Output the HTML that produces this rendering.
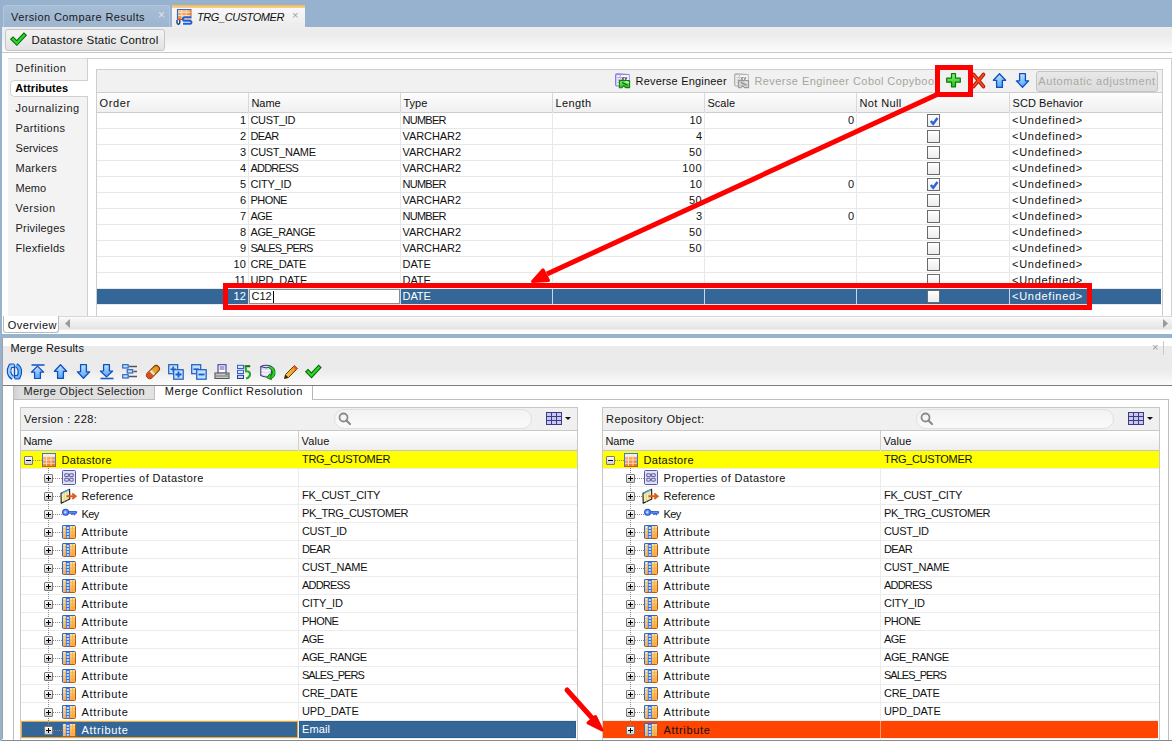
<!DOCTYPE html>
<html><head><meta charset="utf-8"><style>
html,body{margin:0;padding:0;}
body{width:1172px;height:741px;position:relative;overflow:hidden;background:#fff;font-family:'Liberation Sans', sans-serif;}
.t{position:absolute;white-space:nowrap;line-height:16px;font-family:'Liberation Sans', sans-serif;}
svg{overflow:visible}
</style></head><body>
<div style="position:absolute;left:0px;top:0px;width:1172px;height:27px;background:#97b2ce;"></div>
<div style="position:absolute;left:0px;top:27px;width:2px;height:714px;background:#97b2ce;"></div>
<div style="position:absolute;left:3px;top:5px;width:167px;height:22px;background:linear-gradient(#a7bdd6,#9db5d0);border:1px solid #b3c6dc;border-bottom:none;border-radius:3px 3px 0 0;box-sizing:border-box;"></div>
<div class="t" style="left:11px;top:9.19px;font-size:11px;font-weight:normal;letter-spacing:0.403px;color:#1a1a1a;">Version Compare Results</div>
<div class="t" style="left:158px;top:6.84px;font-size:12px;font-weight:normal;letter-spacing:0px;color:#dce5ef;">×</div>
<div style="position:absolute;left:172px;top:5px;width:133px;height:22px;background:linear-gradient(#fafafa,#ececec);border-radius:2px 2px 0 0;"></div>
<div style="position:absolute;left:172px;top:5px;width:133px;height:3px;background:linear-gradient(#f4b756,#fbd48e);border-radius:2px 2px 0 0;"></div>
<div class="t" style="left:197px;top:9.19px;font-size:11px;font-weight:normal;font-style:italic;letter-spacing:-0.424px;color:#111;">TRG_CUSTOMER</div>
<div class="t" style="left:292px;top:7.19px;font-size:11px;font-weight:normal;letter-spacing:0px;color:#a0a0a0;">×</div>
<div style="position:absolute;left:2px;top:27px;width:1170px;height:25px;background:linear-gradient(#f2f2f2 0px,#ececec 1px,#ececec 9px,#fcfcfc 25px);"></div>
<div style="position:absolute;left:2px;top:52px;width:1170px;height:1px;background:#c9c9c9;"></div>
<div style="position:absolute;left:5px;top:29px;width:160px;height:22px;background:linear-gradient(#f4f4f4,#e2e2e2);border:1px solid #c6c6c6;border-radius:3px;box-sizing:border-box;"></div>
<div class="t" style="left:31.5px;top:32.32px;font-size:11.5px;font-weight:normal;letter-spacing:0.204px;color:#111;">Datastore Static Control</div>
<svg style="position:absolute;left:0px;top:0px" width="30" height="50" viewBox="0 0 30 50"><path d="M13 39.2 L16.8 43 L24 35.4" fill="none" stroke="#0b5e0b" stroke-width="4.3" stroke-linecap="square"/><path d="M13 39.2 L16.8 43 L24 35.4" fill="none" stroke="#25dc25" stroke-width="2.3" stroke-linecap="square"/></svg>
<div style="position:absolute;left:2px;top:53px;width:1170px;height:280px;background:#fff;"></div>
<div style="position:absolute;left:8px;top:58px;width:80px;height:258px;background:#f3f3f3;border-top:1px solid #dcdcdc;box-sizing:border-box;"></div>
<div style="position:absolute;left:87px;top:58px;width:1085px;height:1px;background:#cfcfcf;"></div>
<div style="position:absolute;left:87px;top:58px;width:1px;height:258px;background:#cfcfcf;"></div>
<div style="position:absolute;left:1171px;top:58px;width:1px;height:258px;background:#d0d0d0;"></div>
<div style="position:absolute;left:10px;top:80px;width:78px;height:17px;background:#fff;border:1px solid #d0d0d0;border-right:none;border-radius:5px 0 0 5px;box-sizing:border-box;"></div>
<div class="t" style="left:15.5px;top:60.19px;font-size:11px;font-weight:normal;letter-spacing:0.514px;color:#1a1a1a;">Definition</div>
<div class="t" style="left:15.2px;top:80.19px;font-size:11px;font-weight:bold;letter-spacing:0.105px;color:#000;">Attributes</div>
<div class="t" style="left:15.5px;top:100.19px;font-size:11px;font-weight:normal;letter-spacing:0.441px;color:#1a1a1a;">Journalizing</div>
<div class="t" style="left:15.5px;top:120.19px;font-size:11px;font-weight:normal;letter-spacing:0.414px;color:#1a1a1a;">Partitions</div>
<div class="t" style="left:15.5px;top:140.19px;font-size:11px;font-weight:normal;letter-spacing:0.052px;color:#1a1a1a;">Services</div>
<div class="t" style="left:15.5px;top:160.19px;font-size:11px;font-weight:normal;letter-spacing:0.267px;color:#1a1a1a;">Markers</div>
<div class="t" style="left:15.5px;top:180.19px;font-size:11px;font-weight:normal;letter-spacing:0.034px;color:#1a1a1a;">Memo</div>
<div class="t" style="left:15.5px;top:200.19px;font-size:11px;font-weight:normal;letter-spacing:0.471px;color:#1a1a1a;">Version</div>
<div class="t" style="left:15.5px;top:220.19px;font-size:11px;font-weight:normal;letter-spacing:0.201px;color:#1a1a1a;">Privileges</div>
<div class="t" style="left:15.5px;top:240.19px;font-size:11px;font-weight:normal;letter-spacing:0.323px;color:#1a1a1a;">Flexfields</div>
<div style="position:absolute;left:96px;top:69px;width:1067px;height:24px;background:#f1f1f1;border:1px solid #cdcdcd;border-bottom:none;box-sizing:border-box;"></div>
<div class="t" style="left:635.5px;top:72.89px;font-size:11px;font-weight:normal;letter-spacing:0.202px;color:#111;">Reverse Engineer</div>
<div class="t" style="left:754.4px;top:72.89px;font-size:11px;font-weight:normal;letter-spacing:0.438px;color:#a6a69c;">Reverse Engineer Cobol Copybook</div>
<div style="position:absolute;left:1036px;top:71px;width:122px;height:21px;background:linear-gradient(#e8e8e8,#dcdcdc);border:1px solid #c4c4c4;border-radius:3px;box-sizing:border-box;"></div>
<div class="t" style="left:1038.3px;top:73.19px;font-size:11px;font-weight:normal;letter-spacing:0.576px;color:#a9a9a2;">Automatic adjustment</div>
<div style="position:absolute;left:96px;top:92px;width:1067px;height:21px;background:linear-gradient(#fdfdfd,#f0f0f0);border:1px solid #cdcdcd;border-left:1px solid #cdcdcd;box-sizing:border-box;"></div>
<div style="position:absolute;left:248px;top:93px;width:1px;height:19px;background:#d8d8d8;"></div>
<div style="position:absolute;left:400px;top:93px;width:1px;height:19px;background:#d8d8d8;"></div>
<div style="position:absolute;left:552px;top:93px;width:1px;height:19px;background:#d8d8d8;"></div>
<div style="position:absolute;left:704px;top:93px;width:1px;height:19px;background:#d8d8d8;"></div>
<div style="position:absolute;left:856px;top:93px;width:1px;height:19px;background:#d8d8d8;"></div>
<div style="position:absolute;left:1009px;top:93px;width:1px;height:19px;background:#d8d8d8;"></div>
<div class="t" style="left:99.5px;top:95.19px;font-size:11px;font-weight:normal;letter-spacing:0.615px;color:#111;">Order</div>
<div class="t" style="left:251.5px;top:95.19px;font-size:11px;font-weight:normal;letter-spacing:-0.086px;color:#111;">Name</div>
<div class="t" style="left:403.5px;top:95.19px;font-size:11px;font-weight:normal;letter-spacing:0px;color:#111;">Type</div>
<div class="t" style="left:555.5px;top:95.19px;font-size:11px;font-weight:normal;letter-spacing:0.391px;color:#111;">Length</div>
<div class="t" style="left:707.5px;top:95.19px;font-size:11px;font-weight:normal;letter-spacing:0px;color:#111;">Scale</div>
<div class="t" style="left:859.5px;top:95.19px;font-size:11px;font-weight:normal;letter-spacing:0.384px;color:#111;">Not Null</div>
<div class="t" style="left:1012.5px;top:95.19px;font-size:11px;font-weight:normal;letter-spacing:0.066px;color:#111;">SCD Behavior</div>
<div style="position:absolute;left:96px;top:112px;width:1px;height:204px;background:#cdcdcd;"></div>
<div style="position:absolute;left:1162px;top:112px;width:1px;height:204px;background:#cdcdcd;"></div>
<div style="position:absolute;left:97px;top:128px;width:1065px;height:1px;background:#e8e8e8;"></div>
<div style="position:absolute;left:97px;top:144px;width:1065px;height:1px;background:#e8e8e8;"></div>
<div style="position:absolute;left:97px;top:160px;width:1065px;height:1px;background:#e8e8e8;"></div>
<div style="position:absolute;left:97px;top:176px;width:1065px;height:1px;background:#e8e8e8;"></div>
<div style="position:absolute;left:97px;top:192px;width:1065px;height:1px;background:#e8e8e8;"></div>
<div style="position:absolute;left:97px;top:208px;width:1065px;height:1px;background:#e8e8e8;"></div>
<div style="position:absolute;left:97px;top:224px;width:1065px;height:1px;background:#e8e8e8;"></div>
<div style="position:absolute;left:97px;top:240px;width:1065px;height:1px;background:#e8e8e8;"></div>
<div style="position:absolute;left:97px;top:256px;width:1065px;height:1px;background:#e8e8e8;"></div>
<div style="position:absolute;left:97px;top:272px;width:1065px;height:1px;background:#e8e8e8;"></div>
<div style="position:absolute;left:97px;top:288px;width:1065px;height:1px;background:#e8e8e8;"></div>
<div style="position:absolute;left:97px;top:304px;width:1065px;height:1px;background:#e8e8e8;"></div>
<div style="position:absolute;left:248px;top:112px;width:1px;height:192px;background:#e8e8e8;"></div>
<div style="position:absolute;left:400px;top:112px;width:1px;height:192px;background:#e8e8e8;"></div>
<div style="position:absolute;left:552px;top:112px;width:1px;height:192px;background:#e8e8e8;"></div>
<div style="position:absolute;left:704px;top:112px;width:1px;height:192px;background:#e8e8e8;"></div>
<div style="position:absolute;left:856px;top:112px;width:1px;height:192px;background:#e8e8e8;"></div>
<div style="position:absolute;left:1009px;top:112px;width:1px;height:192px;background:#e8e8e8;"></div>
<div class="t" style="left:auto;right:926px;top:112.19px;font-size:11px;font-weight:normal;letter-spacing:0px;color:#111;">1</div>
<div class="t" style="left:250.5px;top:112.19px;font-size:11px;font-weight:normal;letter-spacing:-0.366px;color:#111;">CUST_ID</div>
<div class="t" style="left:402.5px;top:112.19px;font-size:11px;font-weight:normal;letter-spacing:-0.745px;color:#111;">NUMBER</div>
<div class="t" style="left:auto;right:470px;top:112.19px;font-size:11px;font-weight:normal;letter-spacing:0.075px;color:#111;">10</div>
<div class="t" style="left:auto;right:318px;top:112.19px;font-size:11px;font-weight:normal;letter-spacing:0px;color:#111;">0</div>
<div style="position:absolute;left:927px;top:114px;width:13px;height:13px;background:linear-gradient(#ffffff,#ececec);border:1px solid #6a6a6a;box-sizing:border-box;"></div>
<svg style="position:absolute;left:929px;top:116px" width="10" height="10" viewBox="0 0 10 10"><path d="M1.8 5 L4.2 7.8 L8.5 2" fill="none" stroke="#2f62d8" stroke-width="2.4"/></svg>
<div class="t" style="left:1012px;top:112.19px;font-size:11px;font-weight:normal;letter-spacing:0.727px;color:#111;">&lt;Undefined&gt;</div>
<div class="t" style="left:auto;right:926px;top:128.19px;font-size:11px;font-weight:normal;letter-spacing:0px;color:#111;">2</div>
<div class="t" style="left:250.5px;top:128.19px;font-size:11px;font-weight:normal;letter-spacing:-0.591px;color:#111;">DEAR</div>
<div class="t" style="left:402.5px;top:128.19px;font-size:11px;font-weight:normal;letter-spacing:-0.074px;color:#111;">VARCHAR2</div>
<div class="t" style="left:auto;right:470px;top:128.19px;font-size:11px;font-weight:normal;letter-spacing:0px;color:#111;">4</div>
<div style="position:absolute;left:927px;top:130px;width:13px;height:13px;background:linear-gradient(#ffffff,#ececec);border:1px solid #6a6a6a;box-sizing:border-box;"></div>
<div class="t" style="left:1012px;top:128.19px;font-size:11px;font-weight:normal;letter-spacing:0.727px;color:#111;">&lt;Undefined&gt;</div>
<div class="t" style="left:auto;right:926px;top:144.19px;font-size:11px;font-weight:normal;letter-spacing:0px;color:#111;">3</div>
<div class="t" style="left:250.5px;top:144.19px;font-size:11px;font-weight:normal;letter-spacing:-0.294px;color:#111;">CUST_NAME</div>
<div class="t" style="left:402.5px;top:144.19px;font-size:11px;font-weight:normal;letter-spacing:-0.074px;color:#111;">VARCHAR2</div>
<div class="t" style="left:auto;right:470px;top:144.19px;font-size:11px;font-weight:normal;letter-spacing:0.375px;color:#111;">50</div>
<div style="position:absolute;left:927px;top:146px;width:13px;height:13px;background:linear-gradient(#ffffff,#ececec);border:1px solid #6a6a6a;box-sizing:border-box;"></div>
<div class="t" style="left:1012px;top:144.19px;font-size:11px;font-weight:normal;letter-spacing:0.727px;color:#111;">&lt;Undefined&gt;</div>
<div class="t" style="left:auto;right:926px;top:160.19px;font-size:11px;font-weight:normal;letter-spacing:0px;color:#111;">4</div>
<div class="t" style="left:250.5px;top:160.19px;font-size:11px;font-weight:normal;letter-spacing:-0.798px;color:#111;">ADDRESS</div>
<div class="t" style="left:402.5px;top:160.19px;font-size:11px;font-weight:normal;letter-spacing:-0.074px;color:#111;">VARCHAR2</div>
<div class="t" style="left:auto;right:470px;top:160.19px;font-size:11px;font-weight:normal;letter-spacing:0.480px;color:#111;">100</div>
<div style="position:absolute;left:927px;top:162px;width:13px;height:13px;background:linear-gradient(#ffffff,#ececec);border:1px solid #6a6a6a;box-sizing:border-box;"></div>
<div class="t" style="left:1012px;top:160.19px;font-size:11px;font-weight:normal;letter-spacing:0.727px;color:#111;">&lt;Undefined&gt;</div>
<div class="t" style="left:auto;right:926px;top:176.19px;font-size:11px;font-weight:normal;letter-spacing:0px;color:#111;">5</div>
<div class="t" style="left:250.5px;top:176.19px;font-size:11px;font-weight:normal;letter-spacing:-0.212px;color:#111;">CITY_ID</div>
<div class="t" style="left:402.5px;top:176.19px;font-size:11px;font-weight:normal;letter-spacing:-0.745px;color:#111;">NUMBER</div>
<div class="t" style="left:auto;right:470px;top:176.19px;font-size:11px;font-weight:normal;letter-spacing:0.075px;color:#111;">10</div>
<div class="t" style="left:auto;right:318px;top:176.19px;font-size:11px;font-weight:normal;letter-spacing:0px;color:#111;">0</div>
<div style="position:absolute;left:927px;top:178px;width:13px;height:13px;background:linear-gradient(#ffffff,#ececec);border:1px solid #6a6a6a;box-sizing:border-box;"></div>
<svg style="position:absolute;left:929px;top:180px" width="10" height="10" viewBox="0 0 10 10"><path d="M1.8 5 L4.2 7.8 L8.5 2" fill="none" stroke="#2f62d8" stroke-width="2.4"/></svg>
<div class="t" style="left:1012px;top:176.19px;font-size:11px;font-weight:normal;letter-spacing:0.727px;color:#111;">&lt;Undefined&gt;</div>
<div class="t" style="left:auto;right:926px;top:192.19px;font-size:11px;font-weight:normal;letter-spacing:0px;color:#111;">6</div>
<div class="t" style="left:250.5px;top:192.19px;font-size:11px;font-weight:normal;letter-spacing:-0.565px;color:#111;">PHONE</div>
<div class="t" style="left:402.5px;top:192.19px;font-size:11px;font-weight:normal;letter-spacing:-0.074px;color:#111;">VARCHAR2</div>
<div class="t" style="left:auto;right:470px;top:192.19px;font-size:11px;font-weight:normal;letter-spacing:0.375px;color:#111;">50</div>
<div style="position:absolute;left:927px;top:194px;width:13px;height:13px;background:linear-gradient(#ffffff,#ececec);border:1px solid #6a6a6a;box-sizing:border-box;"></div>
<div class="t" style="left:1012px;top:192.19px;font-size:11px;font-weight:normal;letter-spacing:0.727px;color:#111;">&lt;Undefined&gt;</div>
<div class="t" style="left:auto;right:926px;top:208.19px;font-size:11px;font-weight:normal;letter-spacing:0px;color:#111;">7</div>
<div class="t" style="left:250.5px;top:208.19px;font-size:11px;font-weight:normal;letter-spacing:-0.578px;color:#111;">AGE</div>
<div class="t" style="left:402.5px;top:208.19px;font-size:11px;font-weight:normal;letter-spacing:-0.745px;color:#111;">NUMBER</div>
<div class="t" style="left:auto;right:470px;top:208.19px;font-size:11px;font-weight:normal;letter-spacing:0px;color:#111;">3</div>
<div class="t" style="left:auto;right:318px;top:208.19px;font-size:11px;font-weight:normal;letter-spacing:0px;color:#111;">0</div>
<div style="position:absolute;left:927px;top:210px;width:13px;height:13px;background:linear-gradient(#ffffff,#ececec);border:1px solid #6a6a6a;box-sizing:border-box;"></div>
<div class="t" style="left:1012px;top:208.19px;font-size:11px;font-weight:normal;letter-spacing:0.727px;color:#111;">&lt;Undefined&gt;</div>
<div class="t" style="left:auto;right:926px;top:224.19px;font-size:11px;font-weight:normal;letter-spacing:0px;color:#111;">8</div>
<div class="t" style="left:250.5px;top:224.19px;font-size:11px;font-weight:normal;letter-spacing:-0.419px;color:#111;">AGE_RANGE</div>
<div class="t" style="left:402.5px;top:224.19px;font-size:11px;font-weight:normal;letter-spacing:-0.074px;color:#111;">VARCHAR2</div>
<div class="t" style="left:auto;right:470px;top:224.19px;font-size:11px;font-weight:normal;letter-spacing:0.375px;color:#111;">50</div>
<div style="position:absolute;left:927px;top:226px;width:13px;height:13px;background:linear-gradient(#ffffff,#ececec);border:1px solid #6a6a6a;box-sizing:border-box;"></div>
<div class="t" style="left:1012px;top:224.19px;font-size:11px;font-weight:normal;letter-spacing:0.727px;color:#111;">&lt;Undefined&gt;</div>
<div class="t" style="left:auto;right:926px;top:240.19px;font-size:11px;font-weight:normal;letter-spacing:0px;color:#111;">9</div>
<div class="t" style="left:250.5px;top:240.19px;font-size:11px;font-weight:normal;letter-spacing:-0.975px;color:#111;">SALES_PERS</div>
<div class="t" style="left:402.5px;top:240.19px;font-size:11px;font-weight:normal;letter-spacing:-0.074px;color:#111;">VARCHAR2</div>
<div class="t" style="left:auto;right:470px;top:240.19px;font-size:11px;font-weight:normal;letter-spacing:0.375px;color:#111;">50</div>
<div style="position:absolute;left:927px;top:242px;width:13px;height:13px;background:linear-gradient(#ffffff,#ececec);border:1px solid #6a6a6a;box-sizing:border-box;"></div>
<div class="t" style="left:1012px;top:240.19px;font-size:11px;font-weight:normal;letter-spacing:0.727px;color:#111;">&lt;Undefined&gt;</div>
<div class="t" style="left:auto;right:926px;top:256.19px;font-size:11px;font-weight:normal;letter-spacing:0.075px;color:#111;">10</div>
<div class="t" style="left:250.5px;top:256.19px;font-size:11px;font-weight:normal;letter-spacing:-0.297px;color:#111;">CRE_DATE</div>
<div class="t" style="left:402.5px;top:256.19px;font-size:11px;font-weight:normal;letter-spacing:-0.058px;color:#111;">DATE</div>
<div style="position:absolute;left:927px;top:258px;width:13px;height:13px;background:linear-gradient(#ffffff,#ececec);border:1px solid #6a6a6a;box-sizing:border-box;"></div>
<div class="t" style="left:1012px;top:256.19px;font-size:11px;font-weight:normal;letter-spacing:0.727px;color:#111;">&lt;Undefined&gt;</div>
<div class="t" style="left:auto;right:926px;top:272.19px;font-size:11px;font-weight:normal;letter-spacing:0.039px;color:#111;">11</div>
<div class="t" style="left:250.5px;top:272.19px;font-size:11px;font-weight:normal;letter-spacing:-0.159px;color:#111;">UPD_DATE</div>
<div class="t" style="left:402.5px;top:272.19px;font-size:11px;font-weight:normal;letter-spacing:-0.058px;color:#111;">DATE</div>
<div style="position:absolute;left:927px;top:274px;width:13px;height:13px;background:linear-gradient(#ffffff,#ececec);border:1px solid #6a6a6a;box-sizing:border-box;"></div>
<div class="t" style="left:1012px;top:272.19px;font-size:11px;font-weight:normal;letter-spacing:0.727px;color:#111;">&lt;Undefined&gt;</div>
<div style="position:absolute;left:97px;top:289px;width:1064px;height:15px;background:#346698;"></div>
<div style="position:absolute;left:248px;top:289px;width:1px;height:15px;background:#c9d6e4;"></div>
<div style="position:absolute;left:400px;top:289px;width:1px;height:15px;background:#c9d6e4;"></div>
<div style="position:absolute;left:552px;top:289px;width:1px;height:15px;background:#c9d6e4;"></div>
<div style="position:absolute;left:704px;top:289px;width:1px;height:15px;background:#c9d6e4;"></div>
<div style="position:absolute;left:856px;top:289px;width:1px;height:15px;background:#c9d6e4;"></div>
<div style="position:absolute;left:1009px;top:289px;width:1px;height:15px;background:#c9d6e4;"></div>
<div class="t" style="left:auto;right:926px;top:288.19px;font-size:11px;font-weight:normal;letter-spacing:0.075px;color:#fff;">12</div>
<div style="position:absolute;left:249px;top:289px;width:151px;height:15px;background:#fff;border:1px solid #8c8c8c;box-sizing:border-box;"></div>
<div class="t" style="left:251.5px;top:288.19px;font-size:11px;font-weight:normal;letter-spacing:0px;color:#111;">C12</div>
<div style="position:absolute;left:273px;top:291px;width:1px;height:12px;background:#000;"></div>
<div class="t" style="left:402.5px;top:288.19px;font-size:11px;font-weight:normal;letter-spacing:-0.058px;color:#fff;">DATE</div>
<div style="position:absolute;left:927px;top:290px;width:13px;height:13px;background:linear-gradient(#ffffff,#ececec);border:1px solid #6a6a6a;box-sizing:border-box;"></div>
<div class="t" style="left:1012px;top:288.19px;font-size:11px;font-weight:normal;letter-spacing:0.727px;color:#fff;">&lt;Undefined&gt;</div>
<div style="position:absolute;left:59px;top:316px;width:1113px;height:18px;background:linear-gradient(#d8d8d8 0px,#d8d8d8 1px,#fcfcfc 1px,#f3f3f3 4px,#e4e4e4 13px,#fafafa 14px,#ffffff 18px);"></div>
<div style="position:absolute;left:3px;top:316px;width:56px;height:17px;background:#fff;border:1px solid #b9b9b9;border-top:none;border-radius:0 0 3px 3px;box-sizing:border-box;"></div>
<div class="t" style="left:7.8px;top:316.79px;font-size:11px;font-weight:normal;letter-spacing:0.395px;color:#111;">Overview</div>
<svg style="position:absolute;left:64px;top:319px" width="7" height="9" viewBox="0 0 7 9"><path d="M6 0 L1 4.5 L6 9Z" fill="#9a9a9a"/></svg>
<svg style="position:absolute;left:1162px;top:319px" width="7" height="9" viewBox="0 0 7 9"><path d="M1 0 L6 4.5 L1 9Z" fill="#9a9a9a"/></svg>
<div style="position:absolute;left:0px;top:334px;width:1172px;height:4px;background:#97b2ce;"></div>
<div style="position:absolute;left:2px;top:338px;width:1170px;height:403px;background:#fff;border-radius:5px 0 0 0;"></div>
<div style="position:absolute;left:2px;top:338px;width:1170px;height:47px;background:linear-gradient(#ffffff 0px,#ffffff 8px,#ebebeb 8px,#ebebeb 32px,#fbfbfb 46px);border-radius:5px 0 0 0;"></div>
<div class="t" style="left:1152px;top:339.19px;font-size:11px;font-weight:normal;letter-spacing:0px;color:#9a9a9a;">×</div>
<div style="position:absolute;left:1163px;top:341px;width:1px;height:14px;background:#c8c8c8;"></div>
<div class="t" style="left:10.5px;top:340.19px;font-size:11px;font-weight:normal;letter-spacing:0.206px;color:#111;">Merge Results</div>
<div style="position:absolute;left:2px;top:385px;width:1170px;height:1px;background:#7d7d7d;"></div>
<div style="position:absolute;left:13px;top:386px;width:142px;height:14px;background:linear-gradient(90deg,#cfcfcf 0px,#dedede 8px,#e2e2e2 100%);border-right:1px solid #c0c0c0;border-bottom:1px solid #bdbdbd;box-sizing:border-box;"></div>
<div class="t" style="left:23.4px;top:383.49px;font-size:11px;font-weight:normal;letter-spacing:0.330px;color:#222;">Merge Object Selection</div>
<div style="position:absolute;left:155px;top:386px;width:157px;height:14px;background:#fff;"></div>
<div class="t" style="left:164.8px;top:383.49px;font-size:11px;font-weight:normal;letter-spacing:0.482px;color:#111;">Merge Conflict Resolution</div>
<div style="position:absolute;left:312px;top:386px;width:1px;height:14px;background:#b5b5b5;"></div>
<div style="position:absolute;left:312px;top:399px;width:857px;height:1px;background:#bdbdbd;"></div>
<div style="position:absolute;left:13px;top:386px;width:1px;height:355px;background:#bdbdbd;"></div>
<div style="position:absolute;left:1168px;top:399px;width:1px;height:342px;background:#bdbdbd;"></div>
<div style="position:absolute;left:20px;top:407px;width:558px;height:334px;background:#fff;border:1px solid #c8c8c8;box-sizing:border-box;"></div>
<div style="position:absolute;left:20px;top:407px;width:558px;height:24px;background:#f0f0f0;border:1px solid #c8c8c8;border-bottom:1px solid #c8c8c8;box-sizing:border-box;"></div>
<div class="t" style="left:24px;top:411.19px;font-size:11px;font-weight:normal;letter-spacing:0.423px;color:#111;">Version : 228:</div>
<div style="position:absolute;left:334px;top:409px;width:198px;height:20px;background:linear-gradient(#f3f3f3,#fafafa);border:1px solid #e0e0e0;border-radius:10px;box-sizing:border-box;"></div>
<svg style="position:absolute;left:338px;top:412px" width="14" height="14" viewBox="0 0 14 14"><circle cx="5.5" cy="5.5" r="4" fill="none" stroke="#8a8a8a" stroke-width="1.8"/><path d="M8.5 8.5 L12 12" stroke="#8a8a8a" stroke-width="2.2" stroke-linecap="round"/></svg>
<svg style="position:absolute;left:546px;top:412px" width="26" height="13" viewBox="0 0 26 13"><rect x="0.5" y="0.5" width="15" height="12" fill="#c9c9ef" stroke="#3b3b8a"/><path d="M0.5 4.5H15.5M0.5 8.5H15.5M5.5 0.5V12.5M10.5 0.5V12.5" stroke="#3b3b8a" stroke-width="1"/><path d="M19 5 L25 5 L22 8Z" fill="#111"/></svg>
<div style="position:absolute;left:20px;top:431px;width:558px;height:20px;background:linear-gradient(#ffffff,#efefef);border:1px solid #c8c8c8;border-top:none;border-bottom-color:#c4c4d0;box-sizing:border-box;"></div>
<div style="position:absolute;left:298px;top:431px;width:1px;height:19px;background:#d0d0d0;"></div>
<div class="t" style="left:23.4px;top:432.99px;font-size:11px;font-weight:normal;letter-spacing:-0.086px;color:#111;">Name</div>
<div class="t" style="left:301.6px;top:432.99px;font-size:11px;font-weight:normal;letter-spacing:0.134px;color:#111;">Value</div>
<div style="position:absolute;left:21px;top:468px;width:556px;height:1px;background:#ececec;"></div>
<div style="position:absolute;left:21px;top:486px;width:556px;height:1px;background:#ececec;"></div>
<div style="position:absolute;left:21px;top:504px;width:556px;height:1px;background:#ececec;"></div>
<div style="position:absolute;left:21px;top:522px;width:556px;height:1px;background:#ececec;"></div>
<div style="position:absolute;left:21px;top:540px;width:556px;height:1px;background:#ececec;"></div>
<div style="position:absolute;left:21px;top:558px;width:556px;height:1px;background:#ececec;"></div>
<div style="position:absolute;left:21px;top:576px;width:556px;height:1px;background:#ececec;"></div>
<div style="position:absolute;left:21px;top:594px;width:556px;height:1px;background:#ececec;"></div>
<div style="position:absolute;left:21px;top:612px;width:556px;height:1px;background:#ececec;"></div>
<div style="position:absolute;left:21px;top:630px;width:556px;height:1px;background:#ececec;"></div>
<div style="position:absolute;left:21px;top:648px;width:556px;height:1px;background:#ececec;"></div>
<div style="position:absolute;left:21px;top:666px;width:556px;height:1px;background:#ececec;"></div>
<div style="position:absolute;left:21px;top:684px;width:556px;height:1px;background:#ececec;"></div>
<div style="position:absolute;left:21px;top:702px;width:556px;height:1px;background:#ececec;"></div>
<div style="position:absolute;left:21px;top:720px;width:556px;height:1px;background:#ececec;"></div>
<div style="position:absolute;left:21px;top:738px;width:556px;height:1px;background:#ececec;"></div>
<div style="position:absolute;left:298px;top:450px;width:1px;height:290px;background:#ececec;"></div>
<div style="position:absolute;left:21px;top:451px;width:556px;height:17px;background:#ffff00;"></div>
<div style="position:absolute;left:21px;top:721px;width:277px;height:17px;background:#346698;border:1px solid #f5a623;box-sizing:border-box;"></div>
<div style="position:absolute;left:299px;top:721px;width:277px;height:17px;background:#346698;border:1px solid #2b5d95;box-sizing:border-box;"></div>
<div style="position:absolute;left:48px;top:468px;width:1px;height:266px;background:repeating-linear-gradient(#8a8a8a 0 1px,transparent 1px 2px);"></div>
<div style="position:absolute;left:33px;top:460px;width:9px;height:1px;background:repeating-linear-gradient(90deg,#8a8a8a 0 1px,transparent 1px 2px);"></div>
<div style="position:absolute;left:24px;top:456px;width:9px;height:9px;background:linear-gradient(#fafafa,#cfcfcf);border:1px solid #7a7a7a;border-radius:1px;box-sizing:border-box;"></div>
<div style="position:absolute;left:26px;top:460px;width:5px;height:1px;background:#000;"></div>
<svg style="position:absolute;left:42px;top:453px" width="16" height="16" viewBox="0 0 16 16"><rect x="0.5" y="0.5" width="13" height="13" fill="url(#gds)" stroke="#c45a14"/><rect x="1" y="1" width="12" height="2.5" fill="#e8f0fa"/><path d="M0.5 13.5V0.5H13.5V13" fill="none" stroke="#3b7ad6"/><path d="M1 3.5H13 M1 7H13 M1 10.3H13 M4.5 1V13 M9 1V13" stroke="#fde8cf" stroke-width="0.8"/></svg>
<div class="t" style="left:61.5px;top:452.19px;font-size:11px;font-weight:normal;letter-spacing:0.300px;color:#111;">Datastore</div>
<div class="t" style="left:302px;top:451.19px;font-size:11px;font-weight:normal;letter-spacing:-0.341px;color:#111;">TRG_CUSTOMER</div>
<div style="position:absolute;left:53px;top:478px;width:9px;height:1px;background:repeating-linear-gradient(90deg,#8a8a8a 0 1px,transparent 1px 2px);"></div>
<div style="position:absolute;left:44px;top:474px;width:9px;height:9px;background:linear-gradient(#fafafa,#cfcfcf);border:1px solid #7a7a7a;border-radius:1px;box-sizing:border-box;"></div>
<div style="position:absolute;left:46px;top:478px;width:5px;height:1px;background:#000;"></div>
<div style="position:absolute;left:48px;top:476px;width:1px;height:5px;background:#000;"></div>
<svg style="position:absolute;left:62px;top:470px" width="16" height="16" viewBox="0 0 16 16"><rect x="0.5" y="0.5" width="13" height="14" rx="1" fill="#e2e2f4" stroke="#5a5aa0"/><rect x="2.8" y="3.8" width="3.6" height="2.8" rx="0.2" fill="none" stroke="#5a5aa0" stroke-width="1"/><rect x="7.6" y="3.8" width="3.6" height="2.8" rx="0.2" fill="none" stroke="#5a5aa0" stroke-width="1"/><rect x="2.8" y="8.3" width="3.6" height="2.8" rx="0.2" fill="none" stroke="#5a5aa0" stroke-width="1"/><rect x="7.6" y="8.3" width="3.6" height="2.8" rx="0.2" fill="none" stroke="#5a5aa0" stroke-width="1"/></svg>
<div class="t" style="left:81.5px;top:470.19px;font-size:11px;font-weight:normal;letter-spacing:0.403px;color:#111;">Properties of Datastore</div>
<div style="position:absolute;left:53px;top:496px;width:9px;height:1px;background:repeating-linear-gradient(90deg,#8a8a8a 0 1px,transparent 1px 2px);"></div>
<div style="position:absolute;left:44px;top:492px;width:9px;height:9px;background:linear-gradient(#fafafa,#cfcfcf);border:1px solid #7a7a7a;border-radius:1px;box-sizing:border-box;"></div>
<div style="position:absolute;left:46px;top:496px;width:5px;height:1px;background:#000;"></div>
<div style="position:absolute;left:48px;top:494px;width:1px;height:5px;background:#000;"></div>
<svg style="position:absolute;left:61px;top:489px" width="16" height="16" viewBox="0 0 16 16"><path d="M0 4.3 L8.6 0.3 L8.8 10 L0.2 14.3Z" fill="#f8f0b0" stroke="#111" stroke-width="1.1" stroke-linejoin="round"/><path d="M0.6 4.3 L8.3 0.6" stroke="#4aa0f0" stroke-width="1.3"/><path d="M3.3 3V12.8 M6 1.7V11.5" stroke="#d8c880" stroke-width="0.8"/><path d="M5.5 7.3H14 M11.3 4.6 L14.6 7.3 L11.3 10" fill="none" stroke="#e05a1c" stroke-width="1.9"/></svg>
<div class="t" style="left:81.5px;top:488.19px;font-size:11px;font-weight:normal;letter-spacing:0.093px;color:#111;">Reference</div>
<div class="t" style="left:302px;top:487.19px;font-size:11px;font-weight:normal;letter-spacing:-0.258px;color:#111;">FK_CUST_CITY</div>
<div style="position:absolute;left:53px;top:514px;width:9px;height:1px;background:repeating-linear-gradient(90deg,#8a8a8a 0 1px,transparent 1px 2px);"></div>
<div style="position:absolute;left:44px;top:510px;width:9px;height:9px;background:linear-gradient(#fafafa,#cfcfcf);border:1px solid #7a7a7a;border-radius:1px;box-sizing:border-box;"></div>
<div style="position:absolute;left:46px;top:514px;width:5px;height:1px;background:#000;"></div>
<div style="position:absolute;left:48px;top:512px;width:1px;height:5px;background:#000;"></div>
<svg style="position:absolute;left:62px;top:509px" width="16" height="16" viewBox="0 0 16 16"><circle cx="3.6" cy="3.3" r="3" fill="#6b98f2" stroke="#2750c8" stroke-width="1.1"/><circle cx="3.2" cy="3.3" r="1" fill="#dce8ff"/><path d="M6.2 2.6 H14.6 V4.2 H13 V5.8 H11.8 V4.2 H10.6 V5.4 H9.2 V4.2 H6.2Z" fill="#6b98f2" stroke="#2750c8" stroke-width="0.9"/></svg>
<div class="t" style="left:81.5px;top:506.19px;font-size:11px;font-weight:normal;letter-spacing:-0.590px;color:#111;">Key</div>
<div class="t" style="left:302px;top:505.19px;font-size:11px;font-weight:normal;letter-spacing:-0.458px;color:#111;">PK_TRG_CUSTOMER</div>
<div style="position:absolute;left:53px;top:532px;width:9px;height:1px;background:repeating-linear-gradient(90deg,#8a8a8a 0 1px,transparent 1px 2px);"></div>
<div style="position:absolute;left:44px;top:528px;width:9px;height:9px;background:linear-gradient(#fafafa,#cfcfcf);border:1px solid #7a7a7a;border-radius:1px;box-sizing:border-box;"></div>
<div style="position:absolute;left:46px;top:532px;width:5px;height:1px;background:#000;"></div>
<div style="position:absolute;left:48px;top:530px;width:1px;height:5px;background:#000;"></div>
<svg style="position:absolute;left:62px;top:525px" width="16" height="16" viewBox="0 0 16 16"><rect x="0.5" y="0.5" width="13" height="13" rx="1" fill="url(#gat)" stroke="#b85a10"/><path d="M0.5 13 V1.5 Q0.5 0.5 1.5 0.5 H13" fill="none" stroke="#2a6ad8" stroke-width="1.1"/><rect x="3.8" y="1" width="4" height="12.5" fill="#3a6ee0"/><rect x="4.7" y="2" width="2.2" height="2" fill="#c8d8ff"/><rect x="4.7" y="5" width="2.2" height="2" fill="#c8d8ff"/><rect x="4.7" y="8" width="2.2" height="2" fill="#c8d8ff"/><rect x="4.7" y="11" width="2.2" height="1.8" fill="#c8d8ff"/><path d="M1 3.8H3.8 M7.8 3.8H13 M1 7H3.8 M7.8 7H13 M1 10.2H3.8 M7.8 10.2H13 M10.5 1V13" stroke="#f2a848" stroke-width="0.7"/></svg>
<div class="t" style="left:81.5px;top:524.19px;font-size:11px;font-weight:normal;letter-spacing:0.670px;color:#111;">Attribute</div>
<div class="t" style="left:302px;top:523.19px;font-size:11px;font-weight:normal;letter-spacing:-0.366px;color:#111;">CUST_ID</div>
<div style="position:absolute;left:53px;top:550px;width:9px;height:1px;background:repeating-linear-gradient(90deg,#8a8a8a 0 1px,transparent 1px 2px);"></div>
<div style="position:absolute;left:44px;top:546px;width:9px;height:9px;background:linear-gradient(#fafafa,#cfcfcf);border:1px solid #7a7a7a;border-radius:1px;box-sizing:border-box;"></div>
<div style="position:absolute;left:46px;top:550px;width:5px;height:1px;background:#000;"></div>
<div style="position:absolute;left:48px;top:548px;width:1px;height:5px;background:#000;"></div>
<svg style="position:absolute;left:62px;top:543px" width="16" height="16" viewBox="0 0 16 16"><rect x="0.5" y="0.5" width="13" height="13" rx="1" fill="url(#gat)" stroke="#b85a10"/><path d="M0.5 13 V1.5 Q0.5 0.5 1.5 0.5 H13" fill="none" stroke="#2a6ad8" stroke-width="1.1"/><rect x="3.8" y="1" width="4" height="12.5" fill="#3a6ee0"/><rect x="4.7" y="2" width="2.2" height="2" fill="#c8d8ff"/><rect x="4.7" y="5" width="2.2" height="2" fill="#c8d8ff"/><rect x="4.7" y="8" width="2.2" height="2" fill="#c8d8ff"/><rect x="4.7" y="11" width="2.2" height="1.8" fill="#c8d8ff"/><path d="M1 3.8H3.8 M7.8 3.8H13 M1 7H3.8 M7.8 7H13 M1 10.2H3.8 M7.8 10.2H13 M10.5 1V13" stroke="#f2a848" stroke-width="0.7"/></svg>
<div class="t" style="left:81.5px;top:542.19px;font-size:11px;font-weight:normal;letter-spacing:0.670px;color:#111;">Attribute</div>
<div class="t" style="left:302px;top:541.19px;font-size:11px;font-weight:normal;letter-spacing:-0.591px;color:#111;">DEAR</div>
<div style="position:absolute;left:53px;top:568px;width:9px;height:1px;background:repeating-linear-gradient(90deg,#8a8a8a 0 1px,transparent 1px 2px);"></div>
<div style="position:absolute;left:44px;top:564px;width:9px;height:9px;background:linear-gradient(#fafafa,#cfcfcf);border:1px solid #7a7a7a;border-radius:1px;box-sizing:border-box;"></div>
<div style="position:absolute;left:46px;top:568px;width:5px;height:1px;background:#000;"></div>
<div style="position:absolute;left:48px;top:566px;width:1px;height:5px;background:#000;"></div>
<svg style="position:absolute;left:62px;top:561px" width="16" height="16" viewBox="0 0 16 16"><rect x="0.5" y="0.5" width="13" height="13" rx="1" fill="url(#gat)" stroke="#b85a10"/><path d="M0.5 13 V1.5 Q0.5 0.5 1.5 0.5 H13" fill="none" stroke="#2a6ad8" stroke-width="1.1"/><rect x="3.8" y="1" width="4" height="12.5" fill="#3a6ee0"/><rect x="4.7" y="2" width="2.2" height="2" fill="#c8d8ff"/><rect x="4.7" y="5" width="2.2" height="2" fill="#c8d8ff"/><rect x="4.7" y="8" width="2.2" height="2" fill="#c8d8ff"/><rect x="4.7" y="11" width="2.2" height="1.8" fill="#c8d8ff"/><path d="M1 3.8H3.8 M7.8 3.8H13 M1 7H3.8 M7.8 7H13 M1 10.2H3.8 M7.8 10.2H13 M10.5 1V13" stroke="#f2a848" stroke-width="0.7"/></svg>
<div class="t" style="left:81.5px;top:560.19px;font-size:11px;font-weight:normal;letter-spacing:0.670px;color:#111;">Attribute</div>
<div class="t" style="left:302px;top:559.19px;font-size:11px;font-weight:normal;letter-spacing:-0.294px;color:#111;">CUST_NAME</div>
<div style="position:absolute;left:53px;top:586px;width:9px;height:1px;background:repeating-linear-gradient(90deg,#8a8a8a 0 1px,transparent 1px 2px);"></div>
<div style="position:absolute;left:44px;top:582px;width:9px;height:9px;background:linear-gradient(#fafafa,#cfcfcf);border:1px solid #7a7a7a;border-radius:1px;box-sizing:border-box;"></div>
<div style="position:absolute;left:46px;top:586px;width:5px;height:1px;background:#000;"></div>
<div style="position:absolute;left:48px;top:584px;width:1px;height:5px;background:#000;"></div>
<svg style="position:absolute;left:62px;top:579px" width="16" height="16" viewBox="0 0 16 16"><rect x="0.5" y="0.5" width="13" height="13" rx="1" fill="url(#gat)" stroke="#b85a10"/><path d="M0.5 13 V1.5 Q0.5 0.5 1.5 0.5 H13" fill="none" stroke="#2a6ad8" stroke-width="1.1"/><rect x="3.8" y="1" width="4" height="12.5" fill="#3a6ee0"/><rect x="4.7" y="2" width="2.2" height="2" fill="#c8d8ff"/><rect x="4.7" y="5" width="2.2" height="2" fill="#c8d8ff"/><rect x="4.7" y="8" width="2.2" height="2" fill="#c8d8ff"/><rect x="4.7" y="11" width="2.2" height="1.8" fill="#c8d8ff"/><path d="M1 3.8H3.8 M7.8 3.8H13 M1 7H3.8 M7.8 7H13 M1 10.2H3.8 M7.8 10.2H13 M10.5 1V13" stroke="#f2a848" stroke-width="0.7"/></svg>
<div class="t" style="left:81.5px;top:578.19px;font-size:11px;font-weight:normal;letter-spacing:0.670px;color:#111;">Attribute</div>
<div class="t" style="left:302px;top:577.19px;font-size:11px;font-weight:normal;letter-spacing:-0.798px;color:#111;">ADDRESS</div>
<div style="position:absolute;left:53px;top:604px;width:9px;height:1px;background:repeating-linear-gradient(90deg,#8a8a8a 0 1px,transparent 1px 2px);"></div>
<div style="position:absolute;left:44px;top:600px;width:9px;height:9px;background:linear-gradient(#fafafa,#cfcfcf);border:1px solid #7a7a7a;border-radius:1px;box-sizing:border-box;"></div>
<div style="position:absolute;left:46px;top:604px;width:5px;height:1px;background:#000;"></div>
<div style="position:absolute;left:48px;top:602px;width:1px;height:5px;background:#000;"></div>
<svg style="position:absolute;left:62px;top:597px" width="16" height="16" viewBox="0 0 16 16"><rect x="0.5" y="0.5" width="13" height="13" rx="1" fill="url(#gat)" stroke="#b85a10"/><path d="M0.5 13 V1.5 Q0.5 0.5 1.5 0.5 H13" fill="none" stroke="#2a6ad8" stroke-width="1.1"/><rect x="3.8" y="1" width="4" height="12.5" fill="#3a6ee0"/><rect x="4.7" y="2" width="2.2" height="2" fill="#c8d8ff"/><rect x="4.7" y="5" width="2.2" height="2" fill="#c8d8ff"/><rect x="4.7" y="8" width="2.2" height="2" fill="#c8d8ff"/><rect x="4.7" y="11" width="2.2" height="1.8" fill="#c8d8ff"/><path d="M1 3.8H3.8 M7.8 3.8H13 M1 7H3.8 M7.8 7H13 M1 10.2H3.8 M7.8 10.2H13 M10.5 1V13" stroke="#f2a848" stroke-width="0.7"/></svg>
<div class="t" style="left:81.5px;top:596.19px;font-size:11px;font-weight:normal;letter-spacing:0.670px;color:#111;">Attribute</div>
<div class="t" style="left:302px;top:595.19px;font-size:11px;font-weight:normal;letter-spacing:-0.212px;color:#111;">CITY_ID</div>
<div style="position:absolute;left:53px;top:622px;width:9px;height:1px;background:repeating-linear-gradient(90deg,#8a8a8a 0 1px,transparent 1px 2px);"></div>
<div style="position:absolute;left:44px;top:618px;width:9px;height:9px;background:linear-gradient(#fafafa,#cfcfcf);border:1px solid #7a7a7a;border-radius:1px;box-sizing:border-box;"></div>
<div style="position:absolute;left:46px;top:622px;width:5px;height:1px;background:#000;"></div>
<div style="position:absolute;left:48px;top:620px;width:1px;height:5px;background:#000;"></div>
<svg style="position:absolute;left:62px;top:615px" width="16" height="16" viewBox="0 0 16 16"><rect x="0.5" y="0.5" width="13" height="13" rx="1" fill="url(#gat)" stroke="#b85a10"/><path d="M0.5 13 V1.5 Q0.5 0.5 1.5 0.5 H13" fill="none" stroke="#2a6ad8" stroke-width="1.1"/><rect x="3.8" y="1" width="4" height="12.5" fill="#3a6ee0"/><rect x="4.7" y="2" width="2.2" height="2" fill="#c8d8ff"/><rect x="4.7" y="5" width="2.2" height="2" fill="#c8d8ff"/><rect x="4.7" y="8" width="2.2" height="2" fill="#c8d8ff"/><rect x="4.7" y="11" width="2.2" height="1.8" fill="#c8d8ff"/><path d="M1 3.8H3.8 M7.8 3.8H13 M1 7H3.8 M7.8 7H13 M1 10.2H3.8 M7.8 10.2H13 M10.5 1V13" stroke="#f2a848" stroke-width="0.7"/></svg>
<div class="t" style="left:81.5px;top:614.19px;font-size:11px;font-weight:normal;letter-spacing:0.670px;color:#111;">Attribute</div>
<div class="t" style="left:302px;top:613.19px;font-size:11px;font-weight:normal;letter-spacing:-0.565px;color:#111;">PHONE</div>
<div style="position:absolute;left:53px;top:640px;width:9px;height:1px;background:repeating-linear-gradient(90deg,#8a8a8a 0 1px,transparent 1px 2px);"></div>
<div style="position:absolute;left:44px;top:636px;width:9px;height:9px;background:linear-gradient(#fafafa,#cfcfcf);border:1px solid #7a7a7a;border-radius:1px;box-sizing:border-box;"></div>
<div style="position:absolute;left:46px;top:640px;width:5px;height:1px;background:#000;"></div>
<div style="position:absolute;left:48px;top:638px;width:1px;height:5px;background:#000;"></div>
<svg style="position:absolute;left:62px;top:633px" width="16" height="16" viewBox="0 0 16 16"><rect x="0.5" y="0.5" width="13" height="13" rx="1" fill="url(#gat)" stroke="#b85a10"/><path d="M0.5 13 V1.5 Q0.5 0.5 1.5 0.5 H13" fill="none" stroke="#2a6ad8" stroke-width="1.1"/><rect x="3.8" y="1" width="4" height="12.5" fill="#3a6ee0"/><rect x="4.7" y="2" width="2.2" height="2" fill="#c8d8ff"/><rect x="4.7" y="5" width="2.2" height="2" fill="#c8d8ff"/><rect x="4.7" y="8" width="2.2" height="2" fill="#c8d8ff"/><rect x="4.7" y="11" width="2.2" height="1.8" fill="#c8d8ff"/><path d="M1 3.8H3.8 M7.8 3.8H13 M1 7H3.8 M7.8 7H13 M1 10.2H3.8 M7.8 10.2H13 M10.5 1V13" stroke="#f2a848" stroke-width="0.7"/></svg>
<div class="t" style="left:81.5px;top:632.19px;font-size:11px;font-weight:normal;letter-spacing:0.670px;color:#111;">Attribute</div>
<div class="t" style="left:302px;top:631.19px;font-size:11px;font-weight:normal;letter-spacing:-0.578px;color:#111;">AGE</div>
<div style="position:absolute;left:53px;top:658px;width:9px;height:1px;background:repeating-linear-gradient(90deg,#8a8a8a 0 1px,transparent 1px 2px);"></div>
<div style="position:absolute;left:44px;top:654px;width:9px;height:9px;background:linear-gradient(#fafafa,#cfcfcf);border:1px solid #7a7a7a;border-radius:1px;box-sizing:border-box;"></div>
<div style="position:absolute;left:46px;top:658px;width:5px;height:1px;background:#000;"></div>
<div style="position:absolute;left:48px;top:656px;width:1px;height:5px;background:#000;"></div>
<svg style="position:absolute;left:62px;top:651px" width="16" height="16" viewBox="0 0 16 16"><rect x="0.5" y="0.5" width="13" height="13" rx="1" fill="url(#gat)" stroke="#b85a10"/><path d="M0.5 13 V1.5 Q0.5 0.5 1.5 0.5 H13" fill="none" stroke="#2a6ad8" stroke-width="1.1"/><rect x="3.8" y="1" width="4" height="12.5" fill="#3a6ee0"/><rect x="4.7" y="2" width="2.2" height="2" fill="#c8d8ff"/><rect x="4.7" y="5" width="2.2" height="2" fill="#c8d8ff"/><rect x="4.7" y="8" width="2.2" height="2" fill="#c8d8ff"/><rect x="4.7" y="11" width="2.2" height="1.8" fill="#c8d8ff"/><path d="M1 3.8H3.8 M7.8 3.8H13 M1 7H3.8 M7.8 7H13 M1 10.2H3.8 M7.8 10.2H13 M10.5 1V13" stroke="#f2a848" stroke-width="0.7"/></svg>
<div class="t" style="left:81.5px;top:650.19px;font-size:11px;font-weight:normal;letter-spacing:0.670px;color:#111;">Attribute</div>
<div class="t" style="left:302px;top:649.19px;font-size:11px;font-weight:normal;letter-spacing:-0.419px;color:#111;">AGE_RANGE</div>
<div style="position:absolute;left:53px;top:676px;width:9px;height:1px;background:repeating-linear-gradient(90deg,#8a8a8a 0 1px,transparent 1px 2px);"></div>
<div style="position:absolute;left:44px;top:672px;width:9px;height:9px;background:linear-gradient(#fafafa,#cfcfcf);border:1px solid #7a7a7a;border-radius:1px;box-sizing:border-box;"></div>
<div style="position:absolute;left:46px;top:676px;width:5px;height:1px;background:#000;"></div>
<div style="position:absolute;left:48px;top:674px;width:1px;height:5px;background:#000;"></div>
<svg style="position:absolute;left:62px;top:669px" width="16" height="16" viewBox="0 0 16 16"><rect x="0.5" y="0.5" width="13" height="13" rx="1" fill="url(#gat)" stroke="#b85a10"/><path d="M0.5 13 V1.5 Q0.5 0.5 1.5 0.5 H13" fill="none" stroke="#2a6ad8" stroke-width="1.1"/><rect x="3.8" y="1" width="4" height="12.5" fill="#3a6ee0"/><rect x="4.7" y="2" width="2.2" height="2" fill="#c8d8ff"/><rect x="4.7" y="5" width="2.2" height="2" fill="#c8d8ff"/><rect x="4.7" y="8" width="2.2" height="2" fill="#c8d8ff"/><rect x="4.7" y="11" width="2.2" height="1.8" fill="#c8d8ff"/><path d="M1 3.8H3.8 M7.8 3.8H13 M1 7H3.8 M7.8 7H13 M1 10.2H3.8 M7.8 10.2H13 M10.5 1V13" stroke="#f2a848" stroke-width="0.7"/></svg>
<div class="t" style="left:81.5px;top:668.19px;font-size:11px;font-weight:normal;letter-spacing:0.670px;color:#111;">Attribute</div>
<div class="t" style="left:302px;top:667.19px;font-size:11px;font-weight:normal;letter-spacing:-0.975px;color:#111;">SALES_PERS</div>
<div style="position:absolute;left:53px;top:694px;width:9px;height:1px;background:repeating-linear-gradient(90deg,#8a8a8a 0 1px,transparent 1px 2px);"></div>
<div style="position:absolute;left:44px;top:690px;width:9px;height:9px;background:linear-gradient(#fafafa,#cfcfcf);border:1px solid #7a7a7a;border-radius:1px;box-sizing:border-box;"></div>
<div style="position:absolute;left:46px;top:694px;width:5px;height:1px;background:#000;"></div>
<div style="position:absolute;left:48px;top:692px;width:1px;height:5px;background:#000;"></div>
<svg style="position:absolute;left:62px;top:687px" width="16" height="16" viewBox="0 0 16 16"><rect x="0.5" y="0.5" width="13" height="13" rx="1" fill="url(#gat)" stroke="#b85a10"/><path d="M0.5 13 V1.5 Q0.5 0.5 1.5 0.5 H13" fill="none" stroke="#2a6ad8" stroke-width="1.1"/><rect x="3.8" y="1" width="4" height="12.5" fill="#3a6ee0"/><rect x="4.7" y="2" width="2.2" height="2" fill="#c8d8ff"/><rect x="4.7" y="5" width="2.2" height="2" fill="#c8d8ff"/><rect x="4.7" y="8" width="2.2" height="2" fill="#c8d8ff"/><rect x="4.7" y="11" width="2.2" height="1.8" fill="#c8d8ff"/><path d="M1 3.8H3.8 M7.8 3.8H13 M1 7H3.8 M7.8 7H13 M1 10.2H3.8 M7.8 10.2H13 M10.5 1V13" stroke="#f2a848" stroke-width="0.7"/></svg>
<div class="t" style="left:81.5px;top:686.19px;font-size:11px;font-weight:normal;letter-spacing:0.670px;color:#111;">Attribute</div>
<div class="t" style="left:302px;top:685.19px;font-size:11px;font-weight:normal;letter-spacing:-0.297px;color:#111;">CRE_DATE</div>
<div style="position:absolute;left:53px;top:712px;width:9px;height:1px;background:repeating-linear-gradient(90deg,#8a8a8a 0 1px,transparent 1px 2px);"></div>
<div style="position:absolute;left:44px;top:708px;width:9px;height:9px;background:linear-gradient(#fafafa,#cfcfcf);border:1px solid #7a7a7a;border-radius:1px;box-sizing:border-box;"></div>
<div style="position:absolute;left:46px;top:712px;width:5px;height:1px;background:#000;"></div>
<div style="position:absolute;left:48px;top:710px;width:1px;height:5px;background:#000;"></div>
<svg style="position:absolute;left:62px;top:705px" width="16" height="16" viewBox="0 0 16 16"><rect x="0.5" y="0.5" width="13" height="13" rx="1" fill="url(#gat)" stroke="#b85a10"/><path d="M0.5 13 V1.5 Q0.5 0.5 1.5 0.5 H13" fill="none" stroke="#2a6ad8" stroke-width="1.1"/><rect x="3.8" y="1" width="4" height="12.5" fill="#3a6ee0"/><rect x="4.7" y="2" width="2.2" height="2" fill="#c8d8ff"/><rect x="4.7" y="5" width="2.2" height="2" fill="#c8d8ff"/><rect x="4.7" y="8" width="2.2" height="2" fill="#c8d8ff"/><rect x="4.7" y="11" width="2.2" height="1.8" fill="#c8d8ff"/><path d="M1 3.8H3.8 M7.8 3.8H13 M1 7H3.8 M7.8 7H13 M1 10.2H3.8 M7.8 10.2H13 M10.5 1V13" stroke="#f2a848" stroke-width="0.7"/></svg>
<div class="t" style="left:81.5px;top:704.19px;font-size:11px;font-weight:normal;letter-spacing:0.670px;color:#111;">Attribute</div>
<div class="t" style="left:302px;top:703.19px;font-size:11px;font-weight:normal;letter-spacing:-0.159px;color:#111;">UPD_DATE</div>
<div style="position:absolute;left:53px;top:730px;width:9px;height:1px;background:repeating-linear-gradient(90deg,#8a8a8a 0 1px,transparent 1px 2px);"></div>
<div style="position:absolute;left:44px;top:726px;width:9px;height:9px;background:linear-gradient(#fafafa,#cfcfcf);border:1px solid #7a7a7a;border-radius:1px;box-sizing:border-box;"></div>
<div style="position:absolute;left:46px;top:730px;width:5px;height:1px;background:#000;"></div>
<div style="position:absolute;left:48px;top:728px;width:1px;height:5px;background:#000;"></div>
<svg style="position:absolute;left:62px;top:723px" width="16" height="16" viewBox="0 0 16 16"><rect x="0.5" y="0.5" width="13" height="13" rx="1" fill="url(#gat)" stroke="#b85a10"/><path d="M0.5 13 V1.5 Q0.5 0.5 1.5 0.5 H13" fill="none" stroke="#2a6ad8" stroke-width="1.1"/><rect x="3.8" y="1" width="4" height="12.5" fill="#3a6ee0"/><rect x="4.7" y="2" width="2.2" height="2" fill="#c8d8ff"/><rect x="4.7" y="5" width="2.2" height="2" fill="#c8d8ff"/><rect x="4.7" y="8" width="2.2" height="2" fill="#c8d8ff"/><rect x="4.7" y="11" width="2.2" height="1.8" fill="#c8d8ff"/><path d="M1 3.8H3.8 M7.8 3.8H13 M1 7H3.8 M7.8 7H13 M1 10.2H3.8 M7.8 10.2H13 M10.5 1V13" stroke="#f2a848" stroke-width="0.7"/></svg>
<div class="t" style="left:81.5px;top:722.19px;font-size:11px;font-weight:normal;letter-spacing:0.670px;color:#fff;">Attribute</div>
<div class="t" style="left:302px;top:721.19px;font-size:11px;font-weight:normal;letter-spacing:0.097px;color:#fff;">Email</div>
<div style="position:absolute;left:602px;top:407px;width:558px;height:334px;background:#fff;border:1px solid #c8c8c8;box-sizing:border-box;"></div>
<div style="position:absolute;left:602px;top:407px;width:558px;height:24px;background:#f0f0f0;border:1px solid #c8c8c8;border-bottom:1px solid #c8c8c8;box-sizing:border-box;"></div>
<div class="t" style="left:606px;top:411.19px;font-size:11px;font-weight:normal;letter-spacing:0.440px;color:#111;">Repository Object:</div>
<div style="position:absolute;left:916px;top:409px;width:198px;height:20px;background:linear-gradient(#f3f3f3,#fafafa);border:1px solid #e0e0e0;border-radius:10px;box-sizing:border-box;"></div>
<svg style="position:absolute;left:920px;top:412px" width="14" height="14" viewBox="0 0 14 14"><circle cx="5.5" cy="5.5" r="4" fill="none" stroke="#8a8a8a" stroke-width="1.8"/><path d="M8.5 8.5 L12 12" stroke="#8a8a8a" stroke-width="2.2" stroke-linecap="round"/></svg>
<svg style="position:absolute;left:1128px;top:412px" width="26" height="13" viewBox="0 0 26 13"><rect x="0.5" y="0.5" width="15" height="12" fill="#c9c9ef" stroke="#3b3b8a"/><path d="M0.5 4.5H15.5M0.5 8.5H15.5M5.5 0.5V12.5M10.5 0.5V12.5" stroke="#3b3b8a" stroke-width="1"/><path d="M19 5 L25 5 L22 8Z" fill="#111"/></svg>
<div style="position:absolute;left:602px;top:431px;width:558px;height:20px;background:linear-gradient(#ffffff,#efefef);border:1px solid #c8c8c8;border-top:none;border-bottom-color:#c4c4d0;box-sizing:border-box;"></div>
<div style="position:absolute;left:880px;top:431px;width:1px;height:19px;background:#d0d0d0;"></div>
<div class="t" style="left:605.4px;top:432.99px;font-size:11px;font-weight:normal;letter-spacing:-0.086px;color:#111;">Name</div>
<div class="t" style="left:883.6px;top:432.99px;font-size:11px;font-weight:normal;letter-spacing:0.134px;color:#111;">Value</div>
<div style="position:absolute;left:603px;top:468px;width:556px;height:1px;background:#ececec;"></div>
<div style="position:absolute;left:603px;top:486px;width:556px;height:1px;background:#ececec;"></div>
<div style="position:absolute;left:603px;top:504px;width:556px;height:1px;background:#ececec;"></div>
<div style="position:absolute;left:603px;top:522px;width:556px;height:1px;background:#ececec;"></div>
<div style="position:absolute;left:603px;top:540px;width:556px;height:1px;background:#ececec;"></div>
<div style="position:absolute;left:603px;top:558px;width:556px;height:1px;background:#ececec;"></div>
<div style="position:absolute;left:603px;top:576px;width:556px;height:1px;background:#ececec;"></div>
<div style="position:absolute;left:603px;top:594px;width:556px;height:1px;background:#ececec;"></div>
<div style="position:absolute;left:603px;top:612px;width:556px;height:1px;background:#ececec;"></div>
<div style="position:absolute;left:603px;top:630px;width:556px;height:1px;background:#ececec;"></div>
<div style="position:absolute;left:603px;top:648px;width:556px;height:1px;background:#ececec;"></div>
<div style="position:absolute;left:603px;top:666px;width:556px;height:1px;background:#ececec;"></div>
<div style="position:absolute;left:603px;top:684px;width:556px;height:1px;background:#ececec;"></div>
<div style="position:absolute;left:603px;top:702px;width:556px;height:1px;background:#ececec;"></div>
<div style="position:absolute;left:603px;top:720px;width:556px;height:1px;background:#ececec;"></div>
<div style="position:absolute;left:603px;top:738px;width:556px;height:1px;background:#ececec;"></div>
<div style="position:absolute;left:880px;top:450px;width:1px;height:290px;background:#ececec;"></div>
<div style="position:absolute;left:603px;top:451px;width:556px;height:17px;background:#ffff00;"></div>
<div style="position:absolute;left:603px;top:721px;width:555px;height:17px;background:#ff4500;"></div>
<div style="position:absolute;left:880px;top:721px;width:1px;height:17px;background:#ff9a70;"></div>
<div style="position:absolute;left:630px;top:468px;width:1px;height:266px;background:repeating-linear-gradient(#8a8a8a 0 1px,transparent 1px 2px);"></div>
<div style="position:absolute;left:615px;top:460px;width:9px;height:1px;background:repeating-linear-gradient(90deg,#8a8a8a 0 1px,transparent 1px 2px);"></div>
<div style="position:absolute;left:606px;top:456px;width:9px;height:9px;background:linear-gradient(#fafafa,#cfcfcf);border:1px solid #7a7a7a;border-radius:1px;box-sizing:border-box;"></div>
<div style="position:absolute;left:608px;top:460px;width:5px;height:1px;background:#000;"></div>
<svg style="position:absolute;left:624px;top:453px" width="16" height="16" viewBox="0 0 16 16"><rect x="0.5" y="0.5" width="13" height="13" fill="url(#gds)" stroke="#c45a14"/><rect x="1" y="1" width="12" height="2.5" fill="#e8f0fa"/><path d="M0.5 13.5V0.5H13.5V13" fill="none" stroke="#3b7ad6"/><path d="M1 3.5H13 M1 7H13 M1 10.3H13 M4.5 1V13 M9 1V13" stroke="#fde8cf" stroke-width="0.8"/></svg>
<div class="t" style="left:643.5px;top:452.19px;font-size:11px;font-weight:normal;letter-spacing:0.300px;color:#111;">Datastore</div>
<div class="t" style="left:884px;top:451.19px;font-size:11px;font-weight:normal;letter-spacing:-0.341px;color:#111;">TRG_CUSTOMER</div>
<div style="position:absolute;left:635px;top:478px;width:9px;height:1px;background:repeating-linear-gradient(90deg,#8a8a8a 0 1px,transparent 1px 2px);"></div>
<div style="position:absolute;left:626px;top:474px;width:9px;height:9px;background:linear-gradient(#fafafa,#cfcfcf);border:1px solid #7a7a7a;border-radius:1px;box-sizing:border-box;"></div>
<div style="position:absolute;left:628px;top:478px;width:5px;height:1px;background:#000;"></div>
<div style="position:absolute;left:630px;top:476px;width:1px;height:5px;background:#000;"></div>
<svg style="position:absolute;left:644px;top:470px" width="16" height="16" viewBox="0 0 16 16"><rect x="0.5" y="0.5" width="13" height="14" rx="1" fill="#e2e2f4" stroke="#5a5aa0"/><rect x="2.8" y="3.8" width="3.6" height="2.8" rx="0.2" fill="none" stroke="#5a5aa0" stroke-width="1"/><rect x="7.6" y="3.8" width="3.6" height="2.8" rx="0.2" fill="none" stroke="#5a5aa0" stroke-width="1"/><rect x="2.8" y="8.3" width="3.6" height="2.8" rx="0.2" fill="none" stroke="#5a5aa0" stroke-width="1"/><rect x="7.6" y="8.3" width="3.6" height="2.8" rx="0.2" fill="none" stroke="#5a5aa0" stroke-width="1"/></svg>
<div class="t" style="left:663.5px;top:470.19px;font-size:11px;font-weight:normal;letter-spacing:0.403px;color:#111;">Properties of Datastore</div>
<div style="position:absolute;left:635px;top:496px;width:9px;height:1px;background:repeating-linear-gradient(90deg,#8a8a8a 0 1px,transparent 1px 2px);"></div>
<div style="position:absolute;left:626px;top:492px;width:9px;height:9px;background:linear-gradient(#fafafa,#cfcfcf);border:1px solid #7a7a7a;border-radius:1px;box-sizing:border-box;"></div>
<div style="position:absolute;left:628px;top:496px;width:5px;height:1px;background:#000;"></div>
<div style="position:absolute;left:630px;top:494px;width:1px;height:5px;background:#000;"></div>
<svg style="position:absolute;left:643px;top:489px" width="16" height="16" viewBox="0 0 16 16"><path d="M0 4.3 L8.6 0.3 L8.8 10 L0.2 14.3Z" fill="#f8f0b0" stroke="#111" stroke-width="1.1" stroke-linejoin="round"/><path d="M0.6 4.3 L8.3 0.6" stroke="#4aa0f0" stroke-width="1.3"/><path d="M3.3 3V12.8 M6 1.7V11.5" stroke="#d8c880" stroke-width="0.8"/><path d="M5.5 7.3H14 M11.3 4.6 L14.6 7.3 L11.3 10" fill="none" stroke="#e05a1c" stroke-width="1.9"/></svg>
<div class="t" style="left:663.5px;top:488.19px;font-size:11px;font-weight:normal;letter-spacing:0.093px;color:#111;">Reference</div>
<div class="t" style="left:884px;top:487.19px;font-size:11px;font-weight:normal;letter-spacing:-0.258px;color:#111;">FK_CUST_CITY</div>
<div style="position:absolute;left:635px;top:514px;width:9px;height:1px;background:repeating-linear-gradient(90deg,#8a8a8a 0 1px,transparent 1px 2px);"></div>
<div style="position:absolute;left:626px;top:510px;width:9px;height:9px;background:linear-gradient(#fafafa,#cfcfcf);border:1px solid #7a7a7a;border-radius:1px;box-sizing:border-box;"></div>
<div style="position:absolute;left:628px;top:514px;width:5px;height:1px;background:#000;"></div>
<div style="position:absolute;left:630px;top:512px;width:1px;height:5px;background:#000;"></div>
<svg style="position:absolute;left:644px;top:509px" width="16" height="16" viewBox="0 0 16 16"><circle cx="3.6" cy="3.3" r="3" fill="#6b98f2" stroke="#2750c8" stroke-width="1.1"/><circle cx="3.2" cy="3.3" r="1" fill="#dce8ff"/><path d="M6.2 2.6 H14.6 V4.2 H13 V5.8 H11.8 V4.2 H10.6 V5.4 H9.2 V4.2 H6.2Z" fill="#6b98f2" stroke="#2750c8" stroke-width="0.9"/></svg>
<div class="t" style="left:663.5px;top:506.19px;font-size:11px;font-weight:normal;letter-spacing:-0.590px;color:#111;">Key</div>
<div class="t" style="left:884px;top:505.19px;font-size:11px;font-weight:normal;letter-spacing:-0.458px;color:#111;">PK_TRG_CUSTOMER</div>
<div style="position:absolute;left:635px;top:532px;width:9px;height:1px;background:repeating-linear-gradient(90deg,#8a8a8a 0 1px,transparent 1px 2px);"></div>
<div style="position:absolute;left:626px;top:528px;width:9px;height:9px;background:linear-gradient(#fafafa,#cfcfcf);border:1px solid #7a7a7a;border-radius:1px;box-sizing:border-box;"></div>
<div style="position:absolute;left:628px;top:532px;width:5px;height:1px;background:#000;"></div>
<div style="position:absolute;left:630px;top:530px;width:1px;height:5px;background:#000;"></div>
<svg style="position:absolute;left:644px;top:525px" width="16" height="16" viewBox="0 0 16 16"><rect x="0.5" y="0.5" width="13" height="13" rx="1" fill="url(#gat)" stroke="#b85a10"/><path d="M0.5 13 V1.5 Q0.5 0.5 1.5 0.5 H13" fill="none" stroke="#2a6ad8" stroke-width="1.1"/><rect x="3.8" y="1" width="4" height="12.5" fill="#3a6ee0"/><rect x="4.7" y="2" width="2.2" height="2" fill="#c8d8ff"/><rect x="4.7" y="5" width="2.2" height="2" fill="#c8d8ff"/><rect x="4.7" y="8" width="2.2" height="2" fill="#c8d8ff"/><rect x="4.7" y="11" width="2.2" height="1.8" fill="#c8d8ff"/><path d="M1 3.8H3.8 M7.8 3.8H13 M1 7H3.8 M7.8 7H13 M1 10.2H3.8 M7.8 10.2H13 M10.5 1V13" stroke="#f2a848" stroke-width="0.7"/></svg>
<div class="t" style="left:663.5px;top:524.19px;font-size:11px;font-weight:normal;letter-spacing:0.670px;color:#111;">Attribute</div>
<div class="t" style="left:884px;top:523.19px;font-size:11px;font-weight:normal;letter-spacing:-0.366px;color:#111;">CUST_ID</div>
<div style="position:absolute;left:635px;top:550px;width:9px;height:1px;background:repeating-linear-gradient(90deg,#8a8a8a 0 1px,transparent 1px 2px);"></div>
<div style="position:absolute;left:626px;top:546px;width:9px;height:9px;background:linear-gradient(#fafafa,#cfcfcf);border:1px solid #7a7a7a;border-radius:1px;box-sizing:border-box;"></div>
<div style="position:absolute;left:628px;top:550px;width:5px;height:1px;background:#000;"></div>
<div style="position:absolute;left:630px;top:548px;width:1px;height:5px;background:#000;"></div>
<svg style="position:absolute;left:644px;top:543px" width="16" height="16" viewBox="0 0 16 16"><rect x="0.5" y="0.5" width="13" height="13" rx="1" fill="url(#gat)" stroke="#b85a10"/><path d="M0.5 13 V1.5 Q0.5 0.5 1.5 0.5 H13" fill="none" stroke="#2a6ad8" stroke-width="1.1"/><rect x="3.8" y="1" width="4" height="12.5" fill="#3a6ee0"/><rect x="4.7" y="2" width="2.2" height="2" fill="#c8d8ff"/><rect x="4.7" y="5" width="2.2" height="2" fill="#c8d8ff"/><rect x="4.7" y="8" width="2.2" height="2" fill="#c8d8ff"/><rect x="4.7" y="11" width="2.2" height="1.8" fill="#c8d8ff"/><path d="M1 3.8H3.8 M7.8 3.8H13 M1 7H3.8 M7.8 7H13 M1 10.2H3.8 M7.8 10.2H13 M10.5 1V13" stroke="#f2a848" stroke-width="0.7"/></svg>
<div class="t" style="left:663.5px;top:542.19px;font-size:11px;font-weight:normal;letter-spacing:0.670px;color:#111;">Attribute</div>
<div class="t" style="left:884px;top:541.19px;font-size:11px;font-weight:normal;letter-spacing:-0.591px;color:#111;">DEAR</div>
<div style="position:absolute;left:635px;top:568px;width:9px;height:1px;background:repeating-linear-gradient(90deg,#8a8a8a 0 1px,transparent 1px 2px);"></div>
<div style="position:absolute;left:626px;top:564px;width:9px;height:9px;background:linear-gradient(#fafafa,#cfcfcf);border:1px solid #7a7a7a;border-radius:1px;box-sizing:border-box;"></div>
<div style="position:absolute;left:628px;top:568px;width:5px;height:1px;background:#000;"></div>
<div style="position:absolute;left:630px;top:566px;width:1px;height:5px;background:#000;"></div>
<svg style="position:absolute;left:644px;top:561px" width="16" height="16" viewBox="0 0 16 16"><rect x="0.5" y="0.5" width="13" height="13" rx="1" fill="url(#gat)" stroke="#b85a10"/><path d="M0.5 13 V1.5 Q0.5 0.5 1.5 0.5 H13" fill="none" stroke="#2a6ad8" stroke-width="1.1"/><rect x="3.8" y="1" width="4" height="12.5" fill="#3a6ee0"/><rect x="4.7" y="2" width="2.2" height="2" fill="#c8d8ff"/><rect x="4.7" y="5" width="2.2" height="2" fill="#c8d8ff"/><rect x="4.7" y="8" width="2.2" height="2" fill="#c8d8ff"/><rect x="4.7" y="11" width="2.2" height="1.8" fill="#c8d8ff"/><path d="M1 3.8H3.8 M7.8 3.8H13 M1 7H3.8 M7.8 7H13 M1 10.2H3.8 M7.8 10.2H13 M10.5 1V13" stroke="#f2a848" stroke-width="0.7"/></svg>
<div class="t" style="left:663.5px;top:560.19px;font-size:11px;font-weight:normal;letter-spacing:0.670px;color:#111;">Attribute</div>
<div class="t" style="left:884px;top:559.19px;font-size:11px;font-weight:normal;letter-spacing:-0.294px;color:#111;">CUST_NAME</div>
<div style="position:absolute;left:635px;top:586px;width:9px;height:1px;background:repeating-linear-gradient(90deg,#8a8a8a 0 1px,transparent 1px 2px);"></div>
<div style="position:absolute;left:626px;top:582px;width:9px;height:9px;background:linear-gradient(#fafafa,#cfcfcf);border:1px solid #7a7a7a;border-radius:1px;box-sizing:border-box;"></div>
<div style="position:absolute;left:628px;top:586px;width:5px;height:1px;background:#000;"></div>
<div style="position:absolute;left:630px;top:584px;width:1px;height:5px;background:#000;"></div>
<svg style="position:absolute;left:644px;top:579px" width="16" height="16" viewBox="0 0 16 16"><rect x="0.5" y="0.5" width="13" height="13" rx="1" fill="url(#gat)" stroke="#b85a10"/><path d="M0.5 13 V1.5 Q0.5 0.5 1.5 0.5 H13" fill="none" stroke="#2a6ad8" stroke-width="1.1"/><rect x="3.8" y="1" width="4" height="12.5" fill="#3a6ee0"/><rect x="4.7" y="2" width="2.2" height="2" fill="#c8d8ff"/><rect x="4.7" y="5" width="2.2" height="2" fill="#c8d8ff"/><rect x="4.7" y="8" width="2.2" height="2" fill="#c8d8ff"/><rect x="4.7" y="11" width="2.2" height="1.8" fill="#c8d8ff"/><path d="M1 3.8H3.8 M7.8 3.8H13 M1 7H3.8 M7.8 7H13 M1 10.2H3.8 M7.8 10.2H13 M10.5 1V13" stroke="#f2a848" stroke-width="0.7"/></svg>
<div class="t" style="left:663.5px;top:578.19px;font-size:11px;font-weight:normal;letter-spacing:0.670px;color:#111;">Attribute</div>
<div class="t" style="left:884px;top:577.19px;font-size:11px;font-weight:normal;letter-spacing:-0.798px;color:#111;">ADDRESS</div>
<div style="position:absolute;left:635px;top:604px;width:9px;height:1px;background:repeating-linear-gradient(90deg,#8a8a8a 0 1px,transparent 1px 2px);"></div>
<div style="position:absolute;left:626px;top:600px;width:9px;height:9px;background:linear-gradient(#fafafa,#cfcfcf);border:1px solid #7a7a7a;border-radius:1px;box-sizing:border-box;"></div>
<div style="position:absolute;left:628px;top:604px;width:5px;height:1px;background:#000;"></div>
<div style="position:absolute;left:630px;top:602px;width:1px;height:5px;background:#000;"></div>
<svg style="position:absolute;left:644px;top:597px" width="16" height="16" viewBox="0 0 16 16"><rect x="0.5" y="0.5" width="13" height="13" rx="1" fill="url(#gat)" stroke="#b85a10"/><path d="M0.5 13 V1.5 Q0.5 0.5 1.5 0.5 H13" fill="none" stroke="#2a6ad8" stroke-width="1.1"/><rect x="3.8" y="1" width="4" height="12.5" fill="#3a6ee0"/><rect x="4.7" y="2" width="2.2" height="2" fill="#c8d8ff"/><rect x="4.7" y="5" width="2.2" height="2" fill="#c8d8ff"/><rect x="4.7" y="8" width="2.2" height="2" fill="#c8d8ff"/><rect x="4.7" y="11" width="2.2" height="1.8" fill="#c8d8ff"/><path d="M1 3.8H3.8 M7.8 3.8H13 M1 7H3.8 M7.8 7H13 M1 10.2H3.8 M7.8 10.2H13 M10.5 1V13" stroke="#f2a848" stroke-width="0.7"/></svg>
<div class="t" style="left:663.5px;top:596.19px;font-size:11px;font-weight:normal;letter-spacing:0.670px;color:#111;">Attribute</div>
<div class="t" style="left:884px;top:595.19px;font-size:11px;font-weight:normal;letter-spacing:-0.212px;color:#111;">CITY_ID</div>
<div style="position:absolute;left:635px;top:622px;width:9px;height:1px;background:repeating-linear-gradient(90deg,#8a8a8a 0 1px,transparent 1px 2px);"></div>
<div style="position:absolute;left:626px;top:618px;width:9px;height:9px;background:linear-gradient(#fafafa,#cfcfcf);border:1px solid #7a7a7a;border-radius:1px;box-sizing:border-box;"></div>
<div style="position:absolute;left:628px;top:622px;width:5px;height:1px;background:#000;"></div>
<div style="position:absolute;left:630px;top:620px;width:1px;height:5px;background:#000;"></div>
<svg style="position:absolute;left:644px;top:615px" width="16" height="16" viewBox="0 0 16 16"><rect x="0.5" y="0.5" width="13" height="13" rx="1" fill="url(#gat)" stroke="#b85a10"/><path d="M0.5 13 V1.5 Q0.5 0.5 1.5 0.5 H13" fill="none" stroke="#2a6ad8" stroke-width="1.1"/><rect x="3.8" y="1" width="4" height="12.5" fill="#3a6ee0"/><rect x="4.7" y="2" width="2.2" height="2" fill="#c8d8ff"/><rect x="4.7" y="5" width="2.2" height="2" fill="#c8d8ff"/><rect x="4.7" y="8" width="2.2" height="2" fill="#c8d8ff"/><rect x="4.7" y="11" width="2.2" height="1.8" fill="#c8d8ff"/><path d="M1 3.8H3.8 M7.8 3.8H13 M1 7H3.8 M7.8 7H13 M1 10.2H3.8 M7.8 10.2H13 M10.5 1V13" stroke="#f2a848" stroke-width="0.7"/></svg>
<div class="t" style="left:663.5px;top:614.19px;font-size:11px;font-weight:normal;letter-spacing:0.670px;color:#111;">Attribute</div>
<div class="t" style="left:884px;top:613.19px;font-size:11px;font-weight:normal;letter-spacing:-0.565px;color:#111;">PHONE</div>
<div style="position:absolute;left:635px;top:640px;width:9px;height:1px;background:repeating-linear-gradient(90deg,#8a8a8a 0 1px,transparent 1px 2px);"></div>
<div style="position:absolute;left:626px;top:636px;width:9px;height:9px;background:linear-gradient(#fafafa,#cfcfcf);border:1px solid #7a7a7a;border-radius:1px;box-sizing:border-box;"></div>
<div style="position:absolute;left:628px;top:640px;width:5px;height:1px;background:#000;"></div>
<div style="position:absolute;left:630px;top:638px;width:1px;height:5px;background:#000;"></div>
<svg style="position:absolute;left:644px;top:633px" width="16" height="16" viewBox="0 0 16 16"><rect x="0.5" y="0.5" width="13" height="13" rx="1" fill="url(#gat)" stroke="#b85a10"/><path d="M0.5 13 V1.5 Q0.5 0.5 1.5 0.5 H13" fill="none" stroke="#2a6ad8" stroke-width="1.1"/><rect x="3.8" y="1" width="4" height="12.5" fill="#3a6ee0"/><rect x="4.7" y="2" width="2.2" height="2" fill="#c8d8ff"/><rect x="4.7" y="5" width="2.2" height="2" fill="#c8d8ff"/><rect x="4.7" y="8" width="2.2" height="2" fill="#c8d8ff"/><rect x="4.7" y="11" width="2.2" height="1.8" fill="#c8d8ff"/><path d="M1 3.8H3.8 M7.8 3.8H13 M1 7H3.8 M7.8 7H13 M1 10.2H3.8 M7.8 10.2H13 M10.5 1V13" stroke="#f2a848" stroke-width="0.7"/></svg>
<div class="t" style="left:663.5px;top:632.19px;font-size:11px;font-weight:normal;letter-spacing:0.670px;color:#111;">Attribute</div>
<div class="t" style="left:884px;top:631.19px;font-size:11px;font-weight:normal;letter-spacing:-0.578px;color:#111;">AGE</div>
<div style="position:absolute;left:635px;top:658px;width:9px;height:1px;background:repeating-linear-gradient(90deg,#8a8a8a 0 1px,transparent 1px 2px);"></div>
<div style="position:absolute;left:626px;top:654px;width:9px;height:9px;background:linear-gradient(#fafafa,#cfcfcf);border:1px solid #7a7a7a;border-radius:1px;box-sizing:border-box;"></div>
<div style="position:absolute;left:628px;top:658px;width:5px;height:1px;background:#000;"></div>
<div style="position:absolute;left:630px;top:656px;width:1px;height:5px;background:#000;"></div>
<svg style="position:absolute;left:644px;top:651px" width="16" height="16" viewBox="0 0 16 16"><rect x="0.5" y="0.5" width="13" height="13" rx="1" fill="url(#gat)" stroke="#b85a10"/><path d="M0.5 13 V1.5 Q0.5 0.5 1.5 0.5 H13" fill="none" stroke="#2a6ad8" stroke-width="1.1"/><rect x="3.8" y="1" width="4" height="12.5" fill="#3a6ee0"/><rect x="4.7" y="2" width="2.2" height="2" fill="#c8d8ff"/><rect x="4.7" y="5" width="2.2" height="2" fill="#c8d8ff"/><rect x="4.7" y="8" width="2.2" height="2" fill="#c8d8ff"/><rect x="4.7" y="11" width="2.2" height="1.8" fill="#c8d8ff"/><path d="M1 3.8H3.8 M7.8 3.8H13 M1 7H3.8 M7.8 7H13 M1 10.2H3.8 M7.8 10.2H13 M10.5 1V13" stroke="#f2a848" stroke-width="0.7"/></svg>
<div class="t" style="left:663.5px;top:650.19px;font-size:11px;font-weight:normal;letter-spacing:0.670px;color:#111;">Attribute</div>
<div class="t" style="left:884px;top:649.19px;font-size:11px;font-weight:normal;letter-spacing:-0.419px;color:#111;">AGE_RANGE</div>
<div style="position:absolute;left:635px;top:676px;width:9px;height:1px;background:repeating-linear-gradient(90deg,#8a8a8a 0 1px,transparent 1px 2px);"></div>
<div style="position:absolute;left:626px;top:672px;width:9px;height:9px;background:linear-gradient(#fafafa,#cfcfcf);border:1px solid #7a7a7a;border-radius:1px;box-sizing:border-box;"></div>
<div style="position:absolute;left:628px;top:676px;width:5px;height:1px;background:#000;"></div>
<div style="position:absolute;left:630px;top:674px;width:1px;height:5px;background:#000;"></div>
<svg style="position:absolute;left:644px;top:669px" width="16" height="16" viewBox="0 0 16 16"><rect x="0.5" y="0.5" width="13" height="13" rx="1" fill="url(#gat)" stroke="#b85a10"/><path d="M0.5 13 V1.5 Q0.5 0.5 1.5 0.5 H13" fill="none" stroke="#2a6ad8" stroke-width="1.1"/><rect x="3.8" y="1" width="4" height="12.5" fill="#3a6ee0"/><rect x="4.7" y="2" width="2.2" height="2" fill="#c8d8ff"/><rect x="4.7" y="5" width="2.2" height="2" fill="#c8d8ff"/><rect x="4.7" y="8" width="2.2" height="2" fill="#c8d8ff"/><rect x="4.7" y="11" width="2.2" height="1.8" fill="#c8d8ff"/><path d="M1 3.8H3.8 M7.8 3.8H13 M1 7H3.8 M7.8 7H13 M1 10.2H3.8 M7.8 10.2H13 M10.5 1V13" stroke="#f2a848" stroke-width="0.7"/></svg>
<div class="t" style="left:663.5px;top:668.19px;font-size:11px;font-weight:normal;letter-spacing:0.670px;color:#111;">Attribute</div>
<div class="t" style="left:884px;top:667.19px;font-size:11px;font-weight:normal;letter-spacing:-0.975px;color:#111;">SALES_PERS</div>
<div style="position:absolute;left:635px;top:694px;width:9px;height:1px;background:repeating-linear-gradient(90deg,#8a8a8a 0 1px,transparent 1px 2px);"></div>
<div style="position:absolute;left:626px;top:690px;width:9px;height:9px;background:linear-gradient(#fafafa,#cfcfcf);border:1px solid #7a7a7a;border-radius:1px;box-sizing:border-box;"></div>
<div style="position:absolute;left:628px;top:694px;width:5px;height:1px;background:#000;"></div>
<div style="position:absolute;left:630px;top:692px;width:1px;height:5px;background:#000;"></div>
<svg style="position:absolute;left:644px;top:687px" width="16" height="16" viewBox="0 0 16 16"><rect x="0.5" y="0.5" width="13" height="13" rx="1" fill="url(#gat)" stroke="#b85a10"/><path d="M0.5 13 V1.5 Q0.5 0.5 1.5 0.5 H13" fill="none" stroke="#2a6ad8" stroke-width="1.1"/><rect x="3.8" y="1" width="4" height="12.5" fill="#3a6ee0"/><rect x="4.7" y="2" width="2.2" height="2" fill="#c8d8ff"/><rect x="4.7" y="5" width="2.2" height="2" fill="#c8d8ff"/><rect x="4.7" y="8" width="2.2" height="2" fill="#c8d8ff"/><rect x="4.7" y="11" width="2.2" height="1.8" fill="#c8d8ff"/><path d="M1 3.8H3.8 M7.8 3.8H13 M1 7H3.8 M7.8 7H13 M1 10.2H3.8 M7.8 10.2H13 M10.5 1V13" stroke="#f2a848" stroke-width="0.7"/></svg>
<div class="t" style="left:663.5px;top:686.19px;font-size:11px;font-weight:normal;letter-spacing:0.670px;color:#111;">Attribute</div>
<div class="t" style="left:884px;top:685.19px;font-size:11px;font-weight:normal;letter-spacing:-0.297px;color:#111;">CRE_DATE</div>
<div style="position:absolute;left:635px;top:712px;width:9px;height:1px;background:repeating-linear-gradient(90deg,#8a8a8a 0 1px,transparent 1px 2px);"></div>
<div style="position:absolute;left:626px;top:708px;width:9px;height:9px;background:linear-gradient(#fafafa,#cfcfcf);border:1px solid #7a7a7a;border-radius:1px;box-sizing:border-box;"></div>
<div style="position:absolute;left:628px;top:712px;width:5px;height:1px;background:#000;"></div>
<div style="position:absolute;left:630px;top:710px;width:1px;height:5px;background:#000;"></div>
<svg style="position:absolute;left:644px;top:705px" width="16" height="16" viewBox="0 0 16 16"><rect x="0.5" y="0.5" width="13" height="13" rx="1" fill="url(#gat)" stroke="#b85a10"/><path d="M0.5 13 V1.5 Q0.5 0.5 1.5 0.5 H13" fill="none" stroke="#2a6ad8" stroke-width="1.1"/><rect x="3.8" y="1" width="4" height="12.5" fill="#3a6ee0"/><rect x="4.7" y="2" width="2.2" height="2" fill="#c8d8ff"/><rect x="4.7" y="5" width="2.2" height="2" fill="#c8d8ff"/><rect x="4.7" y="8" width="2.2" height="2" fill="#c8d8ff"/><rect x="4.7" y="11" width="2.2" height="1.8" fill="#c8d8ff"/><path d="M1 3.8H3.8 M7.8 3.8H13 M1 7H3.8 M7.8 7H13 M1 10.2H3.8 M7.8 10.2H13 M10.5 1V13" stroke="#f2a848" stroke-width="0.7"/></svg>
<div class="t" style="left:663.5px;top:704.19px;font-size:11px;font-weight:normal;letter-spacing:0.670px;color:#111;">Attribute</div>
<div class="t" style="left:884px;top:703.19px;font-size:11px;font-weight:normal;letter-spacing:-0.159px;color:#111;">UPD_DATE</div>
<div style="position:absolute;left:635px;top:730px;width:9px;height:1px;background:repeating-linear-gradient(90deg,#8a8a8a 0 1px,transparent 1px 2px);"></div>
<div style="position:absolute;left:626px;top:726px;width:9px;height:9px;background:linear-gradient(#fafafa,#cfcfcf);border:1px solid #7a7a7a;border-radius:1px;box-sizing:border-box;"></div>
<div style="position:absolute;left:628px;top:730px;width:5px;height:1px;background:#000;"></div>
<div style="position:absolute;left:630px;top:728px;width:1px;height:5px;background:#000;"></div>
<svg style="position:absolute;left:644px;top:723px" width="16" height="16" viewBox="0 0 16 16"><rect x="0.5" y="0.5" width="13" height="13" rx="1" fill="url(#gat)" stroke="#b85a10"/><path d="M0.5 13 V1.5 Q0.5 0.5 1.5 0.5 H13" fill="none" stroke="#2a6ad8" stroke-width="1.1"/><rect x="3.8" y="1" width="4" height="12.5" fill="#3a6ee0"/><rect x="4.7" y="2" width="2.2" height="2" fill="#c8d8ff"/><rect x="4.7" y="5" width="2.2" height="2" fill="#c8d8ff"/><rect x="4.7" y="8" width="2.2" height="2" fill="#c8d8ff"/><rect x="4.7" y="11" width="2.2" height="1.8" fill="#c8d8ff"/><path d="M1 3.8H3.8 M7.8 3.8H13 M1 7H3.8 M7.8 7H13 M1 10.2H3.8 M7.8 10.2H13 M10.5 1V13" stroke="#f2a848" stroke-width="0.7"/></svg>
<div class="t" style="left:663.5px;top:722.19px;font-size:11px;font-weight:normal;letter-spacing:0.670px;color:#111;">Attribute</div>
<div style="position:absolute;left:2px;top:739.5px;width:1170px;height:1.5px;background:#8a8a8a;"></div>
<div style="position:absolute;left:2px;top:338px;width:1px;height:401px;background:#a0a0a0;"></div>
<svg style="position:absolute;left:0px;top:0px" width="0" height="0" viewBox="0 0 0 0"><defs><linearGradient id="gb" x1="0" y1="0" x2="0.3" y2="1"><stop offset="0" stop-color="#d4ecff"/><stop offset="1" stop-color="#58a8f4"/></linearGradient><linearGradient id="gg" x1="0" y1="0" x2="0" y2="1"><stop offset="0" stop-color="#8cf57a"/><stop offset="1" stop-color="#18c014"/></linearGradient><linearGradient id="go" x1="0" y1="0" x2="1" y2="0"><stop offset="0" stop-color="#f8d24a"/><stop offset="1" stop-color="#e08a10"/></linearGradient><linearGradient id="gds" x1="0" y1="0" x2="0.4" y2="1"><stop offset="0" stop-color="#ffd3a0"/><stop offset="1" stop-color="#ee7a2a"/></linearGradient><linearGradient id="gat" x1="0" y1="0" x2="0.3" y2="1"><stop offset="0" stop-color="#fff2b0"/><stop offset="1" stop-color="#f8b048"/></linearGradient></defs></svg>
<svg style="position:absolute;left:946px;top:73px" width="16" height="15" viewBox="0 0 16 15"><path d="M5.5 0.7 H9.5 V5.2 H14.3 V9.2 H9.5 V13.8 H5.5 V9.2 H0.7 V5.2 H5.5Z" fill="url(#gg)" stroke="#0b7a0b" stroke-width="1.2" stroke-linejoin="round"/></svg>
<svg style="position:absolute;left:972px;top:73px" width="13" height="15" viewBox="0 0 13 15"><path d="M1.5 1.5 L11.5 13.5 M11.5 1.5 L1.5 13.5" stroke="#b0160a" stroke-width="3.6" stroke-linecap="round"/><path d="M1.5 1.5 L11.5 13.5 M11.5 1.5 L1.5 13.5" stroke="#ff4a1a" stroke-width="1.8" stroke-linecap="round"/></svg>
<svg style="position:absolute;left:993px;top:73px" width="13" height="15" viewBox="0 0 13 15"><path d="M6.5 0.7 L12.6 7.3 L9.4 7.3 L9.4 14.4 L3.6 14.4 L3.6 7.3 L0.4 7.3Z" fill="url(#gb)" stroke="#0f4fc0" stroke-width="1.3" stroke-linejoin="round"/></svg>
<svg style="position:absolute;left:1016px;top:73px" width="13" height="15" viewBox="0 0 13 15"><path d="M6.5 14.4 L12.6 7.8 L9.4 7.8 L9.4 0.7 L3.6 0.7 L3.6 7.8 L0.4 7.8Z" fill="url(#gb)" stroke="#0f4fc0" stroke-width="1.3" stroke-linejoin="round"/></svg>
<svg style="position:absolute;left:615px;top:73px" width="16" height="16" viewBox="0 0 16 16"><path d="M0.7 2 Q0.7 0.8 2 0.8 L13.8 1.6 L14.2 12.6 L2 13 Q0.7 13 0.7 11.8Z" fill="#ececfa" stroke="#7a74d8" stroke-width="1.2"/><path d="M2.5 4.5H4.8 M2.5 7H4.8 M2.5 9.5H4.8" stroke="#a8a4e0"/><rect x="5.2" y="1.8" width="9" height="5.6" fill="#fff" stroke="#8a86d8" stroke-width="0.7"/><text x="6.3" y="6.5" font-size="5.5" font-weight="bold" font-family="Liberation Sans" fill="#111">xy</text><path d="M4.4 7.6 H14.6 V14.6 H10.5 L8.6 12.6 L7 14.8 H4.4Z" fill="url(#gg)" stroke="#1c7a14" stroke-width="1.1" stroke-linejoin="round"/><path d="M7 9.5 L12.5 12.3" stroke="#0c5a0c" stroke-width="1.2"/><path d="M10.5 8.5 L13.5 9.5" stroke="#eaffea" stroke-width="1"/></svg>
<svg style="position:absolute;left:734px;top:73px" width="16" height="16" viewBox="0 0 16 16"><g opacity="0.6" style="filter:grayscale(1)"><path d="M0.7 2 Q0.7 0.8 2 0.8 L13.8 1.6 L14.2 12.6 L2 13 Q0.7 13 0.7 11.8Z" fill="#ececfa" stroke="#7a74d8" stroke-width="1.2"/><path d="M2.5 4.5H4.8 M2.5 7H4.8 M2.5 9.5H4.8" stroke="#a8a4e0"/><rect x="5.2" y="1.8" width="9" height="5.6" fill="#fff" stroke="#8a86d8" stroke-width="0.7"/><text x="6.3" y="6.5" font-size="5.5" font-weight="bold" font-family="Liberation Sans" fill="#111">xy</text><path d="M4.4 7.6 H14.6 V14.6 H10.5 L8.6 12.6 L7 14.8 H4.4Z" fill="#bdbdbd" stroke="#1c7a14" stroke-width="1.1" stroke-linejoin="round"/><path d="M7 9.5 L12.5 12.3" stroke="#0c5a0c" stroke-width="1.2"/><path d="M10.5 8.5 L13.5 9.5" stroke="#eaffea" stroke-width="1"/></g></svg>
<svg style="position:absolute;left:176px;top:9px" width="17" height="16" viewBox="0 0 17 16"><rect x="1.5" y="0.5" width="13.5" height="10" fill="url(#gds)" stroke="#c45a14"/><path d="M1.5 10.5V0.5H15" fill="none" stroke="#2a6ad8" stroke-width="1.2"/><path d="M2 3.3H14.5 M2 6.5H14.5 M5.8 1V10 M10.2 1V10" stroke="#fde8cf" stroke-width="0.8"/><rect x="6" y="7" width="10.5" height="8.5" fill="#fff" opacity="0.6"/><path d="M15.5 8.3 H9 Q6.8 8.3 6.8 10.2 Q6.8 11.8 9 11.8 H13.3 Q15.5 11.8 15.5 13.4 Q15.5 14.8 13.3 14.8 H7" fill="none" stroke="#1f62d6" stroke-width="1.9"/><path d="M1 11 V13.6 Q1 15.2 2.4 15.2 Q3.8 15.2 3.8 13.6 V11" fill="none" stroke="#163a80" stroke-width="1.4"/></svg>
<svg style="position:absolute;left:7px;top:364px" width="16" height="16" viewBox="0 0 16 16"><path d="M7.2 1.8 H3.6 Q1.6 5 2.2 8.8 Q2.9 12.3 5.8 13.8" fill="none" stroke="#0f4fc0" stroke-width="4.6" stroke-linejoin="round"/><path d="M7.8 13.2 H11.4 Q13.4 10 12.8 6.2 Q12.1 2.7 9.2 1.2" fill="none" stroke="#0f4fc0" stroke-width="4.6" stroke-linejoin="round"/><path d="M7.2 1.8 H3.6 Q1.6 5 2.2 8.8 Q2.9 12.3 5.8 13.8" fill="none" stroke="#9fd0ff" stroke-width="2.4" stroke-linejoin="round"/><path d="M7.8 13.2 H11.4 Q13.4 10 12.8 6.2 Q12.1 2.7 9.2 1.2" fill="none" stroke="#6ab4f8" stroke-width="2.4" stroke-linejoin="round"/><path d="M7.5 0.5 V14.5" stroke="#0f4fc0" stroke-width="1.3"/></svg>
<svg style="position:absolute;left:31px;top:364px" width="14" height="16" viewBox="0 0 14 16"><path d="M0.5 1H13.5" stroke="#1d5cc0" stroke-width="1.6"/><g transform="translate(0,1.5) scale(1,0.9)"><path d="M6.5 0.7 L12.6 7.3 L9.4 7.3 L9.4 14.4 L3.6 14.4 L3.6 7.3 L0.4 7.3Z" fill="url(#gb)" stroke="#0f4fc0" stroke-width="1.3" stroke-linejoin="round"/></g></svg>
<svg style="position:absolute;left:54px;top:364px" width="14" height="16" viewBox="0 0 14 16"><path d="M6.5 0.7 L12.6 7.3 L9.4 7.3 L9.4 14.4 L3.6 14.4 L3.6 7.3 L0.4 7.3Z" fill="url(#gb)" stroke="#0f4fc0" stroke-width="1.3" stroke-linejoin="round"/></svg>
<svg style="position:absolute;left:77px;top:364px" width="14" height="16" viewBox="0 0 14 16"><path d="M6.5 14.4 L12.6 7.8 L9.4 7.8 L9.4 0.7 L3.6 0.7 L3.6 7.8 L0.4 7.8Z" fill="url(#gb)" stroke="#0f4fc0" stroke-width="1.3" stroke-linejoin="round"/></svg>
<svg style="position:absolute;left:100px;top:364px" width="14" height="16" viewBox="0 0 14 16"><g transform="translate(0,0) scale(1,0.9)"><path d="M6.5 14.4 L12.6 7.8 L9.4 7.8 L9.4 0.7 L3.6 0.7 L3.6 7.8 L0.4 7.8Z" fill="url(#gb)" stroke="#0f4fc0" stroke-width="1.3" stroke-linejoin="round"/></g><path d="M0.5 14.5H13.5" stroke="#1d5cc0" stroke-width="1.6"/></svg>
<svg style="position:absolute;left:122px;top:364px" width="16" height="15" viewBox="0 0 16 15"><rect x="0.7" y="0.7" width="5.5" height="3.3" fill="#bfe0ff" stroke="#1d5cc0" stroke-width="1.1"/><rect x="5.2" y="5.7" width="5.5" height="3.3" fill="#bfe0ff" stroke="#1d5cc0" stroke-width="1.1"/><rect x="0.7" y="10.7" width="5.5" height="3.3" fill="#bfe0ff" stroke="#1d5cc0" stroke-width="1.1"/><path d="M7 2.5H15 M11.5 7.5H15 M7 12.5H15" stroke="#555" stroke-width="1.3"/></svg>
<svg style="position:absolute;left:145px;top:364px" width="16" height="16" viewBox="0 0 16 16"><g transform="rotate(-45 8 8)"><rect x="0.3" y="4.8" width="15.4" height="6.4" rx="3" fill="url(#go)" stroke="#7a3a08" stroke-width="1"/><path d="M3.3 4.8 H6 V11.2 H3.3 A3 3 0 0 1 3.3 4.8Z" fill="#d8501a"/><rect x="6" y="5.3" width="2.2" height="5.4" fill="#e4e4e4"/></g></svg>
<svg style="position:absolute;left:168px;top:364px" width="16" height="16" viewBox="0 0 16 16"><rect x="0.7" y="0.7" width="9" height="9" fill="#bfe0ff" stroke="#1d5cc0" stroke-width="1.2"/><path d="M5.2 2.5V8 M2.5 5.2H8" stroke="#1d5cc0" stroke-width="1.6"/><rect x="5.7" y="5.7" width="9.5" height="9.5" fill="#bfe0ff" stroke="#1d5cc0" stroke-width="1.2"/><path d="M10.5 7.5V13.5 M7.5 10.5H13.5" stroke="#1d5cc0" stroke-width="1.8"/></svg>
<svg style="position:absolute;left:191px;top:364px" width="16" height="16" viewBox="0 0 16 16"><rect x="0.7" y="0.7" width="9" height="9" fill="#bfe0ff" stroke="#1d5cc0" stroke-width="1.2"/><path d="M2.5 5.2H8" stroke="#1d5cc0" stroke-width="1.6"/><rect x="5.7" y="5.7" width="9.5" height="9.5" fill="#bfe0ff" stroke="#1d5cc0" stroke-width="1.2"/><path d="M7.5 10.5H13.5" stroke="#1d5cc0" stroke-width="1.8"/></svg>
<svg style="position:absolute;left:214px;top:364px" width="16" height="16" viewBox="0 0 16 16"><rect x="4" y="0.7" width="8" height="8.5" fill="#ffffff" stroke="#3c3c9a" stroke-width="1.1"/><path d="M5.5 3H10.5 M5.5 5H10.5" stroke="#3c3c9a" stroke-width="0.9"/><path d="M1 9 H15 V14.5 H1Z" fill="#c8c8c8" stroke="#555" stroke-width="1.1"/><path d="M2 12H14" stroke="#777"/><rect x="11.5" y="10" width="2" height="1" fill="#2a2"/></svg>
<svg style="position:absolute;left:237px;top:364px" width="15" height="16" viewBox="0 0 15 16"><rect x="0.5" y="1.3" width="6" height="3.2" fill="#dce8ff" stroke="#3a5ac8" stroke-width="1"/><rect x="0.5" y="6.3" width="6" height="3.2" fill="#dce8ff" stroke="#3a5ac8" stroke-width="1"/><rect x="0.5" y="11.3" width="6" height="3.2" fill="#c8d8ff" stroke="#1f3f9a" stroke-width="1"/><path d="M7.6 2.2 H13.2" stroke="#0f6a0f" stroke-width="2"/><path d="M8.6 2.5 L9 7.3 Q13.4 7.2 13 10.6 Q12.6 13.6 9 14.6" fill="none" stroke="#22aa22" stroke-width="2.1"/></svg>
<svg style="position:absolute;left:260px;top:364px" width="16" height="16" viewBox="0 0 16 16"><path d="M0.8 2.6 Q6 -0.2 11.4 2.6 V11.6 Q6 14.4 0.8 11.6Z" fill="#dcdcf2" stroke="#3a3a7a" stroke-width="1.1"/><path d="M0.8 2.6 Q6 5.2 11.4 2.6" fill="none" stroke="#3a3a7a" stroke-width="1"/><path d="M1.5 6 Q6 8.2 10.8 6 M1.5 9 Q6 11.2 10.8 9" fill="none" stroke="#ffffff" stroke-width="1.1"/><path d="M9.8 3.2 Q14.6 5.2 13.6 10 Q12.8 13 9 13.6" fill="none" stroke="#0f7a0f" stroke-width="3.6"/><path d="M9.8 3.2 Q14.6 5.2 13.6 10 Q12.8 13 9 13.6" fill="none" stroke="#28d028" stroke-width="2"/><path d="M10 9.5 L6.8 13.8 L11.5 15.6Z" fill="#28d028" stroke="#0f7a0f" stroke-width="0.9"/></svg>
<svg style="position:absolute;left:283px;top:364px" width="16" height="16" viewBox="0 0 16 16"><path d="M1.5 14.5 L2.5 10.5 L11.5 1.5 L14.5 4.5 L5.5 13.5Z" fill="url(#go)" stroke="#6a3a08" stroke-width="1"/><path d="M11.5 1.5 L14.5 4.5 L13 6 L10 3Z" fill="#e85a20"/><path d="M1.5 14.5 L2.5 10.5 L5.5 13.5Z" fill="#3a2208"/></svg>
<svg style="position:absolute;left:300px;top:360px" width="30" height="24" viewBox="0 0 30 24"><path d="M8 11.8 L11.5 15.3 L18.7 7.6" fill="none" stroke="#0b5e0b" stroke-width="4.3" stroke-linecap="square"/><path d="M8 11.8 L11.5 15.3 L18.7 7.6" fill="none" stroke="#25dc25" stroke-width="2.3" stroke-linecap="square"/></svg>
<svg style="position:absolute;left:0px;top:0px" width="1172" height="741" viewBox="0 0 1172 741"><rect x="937.5" y="67.5" width="33" height="27" fill="none" stroke="#ff0000" stroke-width="5"/><rect x="225.5" y="285.5" width="864" height="22" fill="none" stroke="#ff0000" stroke-width="5"/><path d="M936 95 L547 274" stroke="#ff0000" stroke-width="5" fill="none"/><path d="M532.5 281.5 L543 269.8 L548.5 280.5Z" fill="#ff0000" stroke="#ff0000" stroke-width="3" stroke-linejoin="round"/><path d="M567 690 L593 719" stroke="#ff0000" stroke-width="5" stroke-linecap="round" fill="none"/><path d="M602 730 L595.5 716.5 L588 723Z" fill="#ff0000" stroke="#ff0000" stroke-width="3" stroke-linejoin="round"/></svg>
</body></html>
